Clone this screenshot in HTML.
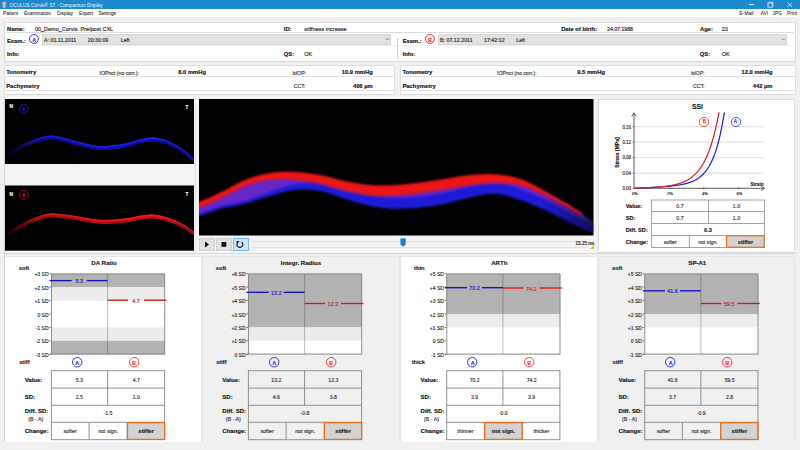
<!DOCTYPE html>
<html><head><meta charset="utf-8"><style>
html,body{margin:0;padding:0;}
body{width:800px;height:450px;position:relative;overflow:hidden;background:#f0f0f0;font-family:"Liberation Sans", sans-serif;}
.t{position:absolute;white-space:nowrap;-webkit-text-stroke:0.15px currentColor;}
</style></head><body>
<div style="position:absolute;left:0px;top:0px;width:800px;height:9px;background:#1c8acc"></div>
<svg style="position:absolute;left:0;top:0" width="9" height="9"><path d="M2.2 2 Q4.3 1.2 6.4 2 L5.8 7.6 Q4.3 8.2 2.8 7.6 Z" fill="#bdb3b8"/><path d="M2.4 2.3 L3.2 7.4" stroke="#d9906a" stroke-width="0.5"/><path d="M6.2 2.3 L5.4 7.4" stroke="#9a8aa0" stroke-width="0.5"/><path d="M3.6 2.6 L4 7" stroke="#e0d8d0" stroke-width="0.8"/></svg>
<div class="t" style="left:9.60px;top:4.40px;font-size:4.8px;line-height:4.8px;color:#eef6fc;-webkit-text-stroke:0">OCULUS Corvis® ST - Comparison Display</div>
<div style="position:absolute;left:749px;top:4px;width:5px;height:0.8px;background:#dfeffa"></div>
<svg style="position:absolute;left:766px;top:1px" width="8" height="8"><rect x="2" y="2" width="4.2" height="4.2" fill="none" stroke="#e6f2fb" stroke-width="0.8"/><path d="M3 2 V1.2 H7 V5.2 H6.2" fill="none" stroke="#e6f2fb" stroke-width="0.7"/></svg>
<svg style="position:absolute;left:786px;top:1px" width="8" height="8"><path d="M1.5 1.5 L6 6 M6 1.5 L1.5 6" stroke="#e6f2fb" stroke-width="0.8"/></svg>
<div style="position:absolute;left:0px;top:9px;width:800px;height:8px;background:#ffffff"></div>
<div class="t" style="left:2.90px;top:12.45px;font-size:4.9px;line-height:4.9px;color:#1a1a1a;-webkit-text-stroke:0.05px currentColor">Patient</div>
<div class="t" style="left:24.00px;top:12.45px;font-size:4.9px;line-height:4.9px;color:#1a1a1a;-webkit-text-stroke:0.05px currentColor">Examination</div>
<div class="t" style="left:57.00px;top:12.45px;font-size:4.9px;line-height:4.9px;color:#1a1a1a;-webkit-text-stroke:0.05px currentColor">Display</div>
<div class="t" style="left:78.90px;top:12.45px;font-size:4.9px;line-height:4.9px;color:#1a1a1a;-webkit-text-stroke:0.05px currentColor">Export</div>
<div class="t" style="left:98.40px;top:12.45px;font-size:4.9px;line-height:4.9px;color:#1a1a1a;-webkit-text-stroke:0.05px currentColor">Settings</div>
<div class="t" style="left:739.50px;top:12.45px;font-size:4.9px;line-height:4.9px;color:#1a1a1a;-webkit-text-stroke:0.05px currentColor">E-Mail</div>
<div class="t" style="left:760.50px;top:12.45px;font-size:4.9px;line-height:4.9px;color:#1a1a1a;-webkit-text-stroke:0.05px currentColor">AVI</div>
<div class="t" style="left:772.50px;top:12.45px;font-size:4.9px;line-height:4.9px;color:#1a1a1a;-webkit-text-stroke:0.05px currentColor">JPG</div>
<div class="t" style="left:787.00px;top:12.45px;font-size:4.9px;line-height:4.9px;color:#1a1a1a;-webkit-text-stroke:0.05px currentColor">Print</div>
<div style="position:absolute;left:4px;top:22px;width:792px;height:40px;background:#fff;border:1px solid #d9d9d9;box-sizing:border-box"></div>
<div style="position:absolute;left:6px;top:32px;width:788px;height:1px;background:#dcdcdc"></div>
<div class="t" style="left:7.00px;top:26.70px;font-size:5.8px;line-height:5.8px;font-weight:700;color:#111;">Name:</div>
<div class="t" style="left:34.90px;top:26.85px;font-size:5.5px;line-height:5.5px;color:#222;">00_Demo_Corvis. Pre/post CXL</div>
<div class="t" style="left:283.80px;top:26.70px;font-size:5.8px;line-height:5.8px;font-weight:700;color:#111;">ID:</div>
<div class="t" style="left:304.20px;top:26.85px;font-size:5.5px;line-height:5.5px;color:#222;">stiffness increase</div>
<div class="t" style="left:561.20px;top:26.70px;font-size:5.8px;line-height:5.8px;font-weight:700;color:#111;">Date of birth:</div>
<div class="t" style="left:607.00px;top:27.00px;font-size:5.2px;line-height:5.2px;color:#222;">24.07.1988</div>
<div class="t" style="left:700.00px;top:26.70px;font-size:5.8px;line-height:5.8px;font-weight:700;color:#111;">Age:</div>
<div class="t" style="left:721.70px;top:26.85px;font-size:5.5px;line-height:5.5px;color:#222;">23</div>
<div class="t" style="left:7.00px;top:39.10px;font-size:5.8px;line-height:5.8px;font-weight:700;color:#111;">Exam.:</div>
<div style="position:absolute;left:42px;top:34px;width:349px;height:11px;background:#e2e2e2;border:1px solid #d6d6d6;box-sizing:border-box"></div>
<div class="t" style="left:44.00px;top:37.95px;font-size:5.3px;line-height:5.3px;color:#2a2a2a;">A: 01.11.2011</div>
<div class="t" style="left:87.70px;top:37.95px;font-size:5.3px;line-height:5.3px;color:#2a2a2a;">20:30:09</div>
<div class="t" style="left:120.70px;top:37.95px;font-size:5.3px;line-height:5.3px;color:#2a2a2a;">Left</div>
<svg style="position:absolute;left:385px;top:37px" width="5" height="5"><path d="M1 1.5 L2.5 3 L4 1.5" fill="none" stroke="#555" stroke-width="0.7"/></svg>
<svg style="position:absolute;left:28.15px;top:33.35px" width="11.90" height="11.90"><circle cx="5.95" cy="5.95" r="4.45" fill="none" stroke="#3333dd" stroke-width="1.0"/></svg>
<div class="t" style="left:-65.90px;width:200px;text-align:center;top:37.60px;font-size:5.4px;line-height:5.4px;font-weight:700;color:#3333dd;">A</div>
<div class="t" style="left:7.00px;top:52.30px;font-size:5.8px;line-height:5.8px;font-weight:700;color:#111;">Info:</div>
<div class="t" style="left:402.70px;top:39.10px;font-size:5.8px;line-height:5.8px;font-weight:700;color:#111;">Exam.:</div>
<div style="position:absolute;left:438px;top:34px;width:349px;height:11px;background:#e2e2e2;border:1px solid #d6d6d6;box-sizing:border-box"></div>
<div class="t" style="left:440.00px;top:37.95px;font-size:5.3px;line-height:5.3px;color:#2a2a2a;">B: 07.12.2011</div>
<div class="t" style="left:484.00px;top:37.95px;font-size:5.3px;line-height:5.3px;color:#2a2a2a;">17:42:12</div>
<div class="t" style="left:516.20px;top:37.95px;font-size:5.3px;line-height:5.3px;color:#2a2a2a;">Left</div>
<svg style="position:absolute;left:781px;top:37px" width="5" height="5"><path d="M1 1.5 L2.5 3 L4 1.5" fill="none" stroke="#555" stroke-width="0.7"/></svg>
<svg style="position:absolute;left:424.05px;top:33.35px" width="11.90" height="11.90"><circle cx="5.95" cy="5.95" r="4.45" fill="none" stroke="#e03030" stroke-width="1.0"/></svg>
<div class="t" style="left:330.00px;width:200px;text-align:center;top:37.60px;font-size:5.4px;line-height:5.4px;font-weight:700;color:#e03030;">B</div>
<div class="t" style="left:402.70px;top:52.30px;font-size:5.8px;line-height:5.8px;font-weight:700;color:#111;">Info:</div>
<div style="position:absolute;left:397px;top:38px;width:1px;height:21px;background:#cfcfcf"></div>
<div style="position:absolute;left:6px;top:45px;width:788px;height:0.6px;background:#eeeeee"></div>
<div class="t" style="left:283.80px;top:52.30px;font-size:5.8px;line-height:5.8px;font-weight:700;color:#111;">QS:</div>
<div class="t" style="left:304.20px;top:52.45px;font-size:5.5px;line-height:5.5px;color:#222;">OK</div>
<div class="t" style="left:699.80px;top:52.30px;font-size:5.8px;line-height:5.8px;font-weight:700;color:#111;">QS:</div>
<div class="t" style="left:721.70px;top:52.45px;font-size:5.5px;line-height:5.5px;color:#222;">OK</div>
<div style="position:absolute;left:4px;top:65px;width:391px;height:30px;background:#fff;border:1px solid #dedede;box-sizing:border-box"></div>
<div style="position:absolute;left:5.5px;top:76px;width:388px;height:1px;background:#e0e0e0"></div>
<div style="position:absolute;left:5.5px;top:90px;width:388px;height:1px;background:#e0e0e0"></div>
<div class="t" style="left:6.20px;top:70.25px;font-size:5.9px;line-height:5.9px;font-weight:700;color:#111;">Tonometry</div>
<div class="t" style="left:6.20px;top:83.65px;font-size:5.9px;line-height:5.9px;font-weight:700;color:#111;">Pachymetry</div>
<div class="t" style="left:99.50px;top:70.80px;font-size:5.2px;line-height:5.2px;color:#333;">IOPnct (no corr.):</div>
<div class="t" style="right:594.00px;top:70.30px;font-size:5.8px;line-height:5.8px;font-weight:700;color:#111;">8.0 mmHg</div>
<div class="t" style="left:292.80px;top:70.80px;font-size:5.2px;line-height:5.2px;color:#333;">bIOP:</div>
<div class="t" style="right:427.30px;top:70.30px;font-size:5.8px;line-height:5.8px;font-weight:700;color:#111;">10.9 mmHg</div>
<div class="t" style="left:293.70px;top:84.00px;font-size:5.2px;line-height:5.2px;color:#333;">CCT:</div>
<div class="t" style="right:427.30px;top:83.70px;font-size:5.8px;line-height:5.8px;font-weight:700;color:#111;">406 µm</div>
<div style="position:absolute;left:400px;top:65px;width:396px;height:30px;background:#fff;border:1px solid #dedede;box-sizing:border-box"></div>
<div style="position:absolute;left:401.5px;top:76px;width:393px;height:1px;background:#e0e0e0"></div>
<div style="position:absolute;left:401.5px;top:90px;width:393px;height:1px;background:#e0e0e0"></div>
<div class="t" style="left:402.40px;top:70.25px;font-size:5.9px;line-height:5.9px;font-weight:700;color:#111;">Tonometry</div>
<div class="t" style="left:402.40px;top:83.65px;font-size:5.9px;line-height:5.9px;font-weight:700;color:#111;">Pachymetry</div>
<div class="t" style="left:497.00px;top:70.80px;font-size:5.2px;line-height:5.2px;color:#333;">IOPnct (no corr.):</div>
<div class="t" style="right:195.00px;top:70.30px;font-size:5.8px;line-height:5.8px;font-weight:700;color:#111;">9.5 mmHg</div>
<div class="t" style="left:691.30px;top:70.80px;font-size:5.2px;line-height:5.2px;color:#333;">bIOP:</div>
<div class="t" style="right:27.50px;top:70.30px;font-size:5.8px;line-height:5.8px;font-weight:700;color:#111;">12.0 mmHg</div>
<div class="t" style="left:693.00px;top:84.00px;font-size:5.2px;line-height:5.2px;color:#333;">CCT:</div>
<div class="t" style="right:27.50px;top:83.70px;font-size:5.8px;line-height:5.8px;font-weight:700;color:#111;">442 µm</div>
<div style="position:absolute;left:4px;top:96px;width:592px;height:157px;background:#f4f4f4"></div>
<div style="position:absolute;left:195px;top:99px;width:1px;height:153px;background:#e4e4e4"></div>
<svg style="position:absolute;left:0;top:0" width="800" height="450">
<defs><filter id="b1" x="-10%" y="-50%" width="120%" height="200%"><feGaussianBlur stdDeviation="0.7"/></filter><filter id="b2" x="-10%" y="-50%" width="120%" height="200%"><feGaussianBlur stdDeviation="1.0"/></filter><linearGradient id="fadeS" x1="0" x2="1" y1="0" y2="0"><stop offset="0" stop-color="#fff" stop-opacity="0"/><stop offset="0.2" stop-color="#fff" stop-opacity="0.85"/><stop offset="0.8" stop-color="#fff" stop-opacity="1"/><stop offset="1" stop-color="#fff" stop-opacity="0.7"/></linearGradient><mask id="mA" maskUnits="userSpaceOnUse" x="0" y="0" width="800" height="450"><rect x="5" y="99" width="189" height="65" fill="url(#fadeS)"/></mask><mask id="mB" maskUnits="userSpaceOnUse" x="0" y="0" width="800" height="450"><rect x="5" y="185" width="189" height="66" fill="url(#fadeS)"/></mask></defs>
<rect x="4.5" y="99" width="189.5" height="65" fill="#000"/>
<g mask="url(#mA)"><path d="M8.0,152.51 L9.5,151.69 L11.0,150.80 L12.5,149.89 L14.0,149.00 L15.5,148.19 L17.0,147.39 L18.5,146.59 L20.0,145.79 L21.5,145.00 L23.0,144.22 L24.5,143.45 L26.0,142.80 L27.5,142.19 L29.0,141.58 L30.5,140.98 L32.0,140.39 L33.5,139.82 L35.0,139.28 L36.5,138.77 L38.0,138.29 L39.5,137.82 L41.0,137.35 L42.5,136.90 L44.0,136.48 L45.5,136.11 L47.0,135.80 L48.5,135.58 L50.0,135.45 L51.5,135.43 L53.0,135.51 L54.5,135.67 L56.0,135.90 L57.5,136.19 L59.0,136.51 L60.5,136.85 L62.0,137.20 L63.5,137.54 L65.0,137.90 L66.5,138.30 L68.0,138.73 L69.5,139.17 L71.0,139.64 L72.5,140.12 L74.0,140.62 L75.5,141.04 L77.0,141.33 L78.5,141.65 L80.0,141.99 L81.5,142.35 L83.0,142.72 L84.5,143.09 L86.0,143.47 L87.5,143.84 L89.0,144.20 L90.5,144.54 L92.0,144.86 L93.5,145.15 L95.0,145.41 L96.5,145.63 L98.0,145.80 L99.5,145.92 L101.0,145.99 L102.5,146.02 L104.0,146.00 L105.5,145.95 L107.0,145.87 L108.5,145.76 L110.0,145.62 L111.5,145.46 L113.0,145.28 L114.5,145.08 L116.0,144.86 L117.5,144.64 L119.0,144.40 L120.5,144.17 L122.0,143.93 L123.5,143.69 L125.0,143.45 L126.5,143.13 L128.0,142.77 L129.5,142.37 L131.0,141.93 L132.5,141.48 L134.0,141.02 L135.5,140.56 L137.0,140.10 L138.5,139.67 L140.0,139.26 L141.5,138.88 L143.0,138.55 L144.5,138.28 L146.0,137.93 L147.5,137.64 L149.0,137.45 L150.5,137.36 L152.0,137.35 L153.5,137.40 L155.0,137.50 L156.5,137.65 L158.0,137.87 L159.5,138.16 L161.0,138.52 L162.5,138.92 L164.0,139.37 L165.5,139.87 L167.0,140.42 L168.5,141.03 L170.0,141.68 L171.5,142.39 L173.0,143.14 L174.5,143.93 L176.0,144.76 L177.5,145.66 L179.0,146.61 L180.5,147.60 L182.0,148.61 L183.5,149.65 L185.0,150.70 L186.5,151.98 L188.0,153.40 L189.5,154.86 L191.0,156.22 L192.5,157.37 L194.0,158.20 L194.0,162.30 L192.5,161.47 L191.0,160.32 L189.5,158.96 L188.0,157.50 L186.5,156.08 L185.0,154.80 L183.5,153.75 L182.0,152.71 L180.5,151.70 L179.0,150.71 L177.5,149.76 L176.0,148.86 L174.5,148.03 L173.0,147.24 L171.5,146.49 L170.0,145.78 L168.5,145.13 L167.0,144.52 L165.5,143.97 L164.0,143.47 L162.5,143.02 L161.0,142.62 L159.5,142.26 L158.0,141.97 L156.5,141.75 L155.0,141.60 L153.5,141.50 L152.0,141.45 L150.5,141.46 L149.0,141.55 L147.5,141.74 L146.0,142.03 L144.5,142.38 L143.0,142.65 L141.5,142.98 L140.0,143.36 L138.5,143.77 L137.0,144.20 L135.5,144.66 L134.0,145.12 L132.5,145.58 L131.0,146.03 L129.5,146.47 L128.0,146.87 L126.5,147.23 L125.0,147.55 L123.5,147.79 L122.0,148.03 L120.5,148.27 L119.0,148.50 L117.5,148.74 L116.0,148.96 L114.5,149.18 L113.0,149.38 L111.5,149.56 L110.0,149.72 L108.5,149.86 L107.0,149.97 L105.5,150.05 L104.0,150.10 L102.5,150.12 L101.0,150.09 L99.5,150.02 L98.0,149.90 L96.5,149.73 L95.0,149.51 L93.5,149.25 L92.0,148.96 L90.5,148.64 L89.0,148.30 L87.5,147.94 L86.0,147.57 L84.5,147.19 L83.0,146.82 L81.5,146.45 L80.0,146.09 L78.5,145.75 L77.0,145.43 L75.5,145.14 L74.0,144.72 L72.5,144.22 L71.0,143.74 L69.5,143.27 L68.0,142.83 L66.5,142.40 L65.0,142.00 L63.5,141.64 L62.0,141.30 L60.5,140.95 L59.0,140.61 L57.5,140.29 L56.0,140.00 L54.5,139.77 L53.0,139.61 L51.5,139.53 L50.0,139.55 L48.5,139.68 L47.0,139.90 L45.5,140.21 L44.0,140.58 L42.5,141.00 L41.0,141.45 L39.5,141.92 L38.0,142.39 L36.5,142.87 L35.0,143.38 L33.5,143.92 L32.0,144.49 L30.5,145.08 L29.0,145.68 L27.5,146.29 L26.0,146.90 L24.5,147.55 L23.0,148.32 L21.5,149.10 L20.0,149.89 L18.5,150.69 L17.0,151.49 L15.5,152.29 L14.0,153.10 L12.5,153.99 L11.0,154.90 L9.5,155.79 L8.0,156.61Z" fill="#0e0eb8" filter="url(#b1)"/><path d="M8.0,152.61 L9.5,151.79 L11.0,150.90 L12.5,149.99 L14.0,149.10 L15.5,148.29 L17.0,147.49 L18.5,146.69 L20.0,145.89 L21.5,145.10 L23.0,144.32 L24.5,143.55 L26.0,142.90 L27.5,142.29 L29.0,141.68 L30.5,141.08 L32.0,140.49 L33.5,139.92 L35.0,139.38 L36.5,138.87 L38.0,138.39 L39.5,137.92 L41.0,137.45 L42.5,137.00 L44.0,136.58 L45.5,136.21 L47.0,135.90 L48.5,135.68 L50.0,135.55 L51.5,135.53 L53.0,135.61 L54.5,135.77 L56.0,136.00 L57.5,136.29 L59.0,136.61 L60.5,136.95 L62.0,137.30 L63.5,137.64 L65.0,138.00 L66.5,138.40 L68.0,138.83 L69.5,139.27 L71.0,139.74 L72.5,140.22 L74.0,140.72 L75.5,141.14 L77.0,141.43 L78.5,141.75 L80.0,142.09 L81.5,142.45 L83.0,142.82 L84.5,143.19 L86.0,143.57 L87.5,143.94 L89.0,144.30 L90.5,144.64 L92.0,144.96 L93.5,145.25 L95.0,145.51 L96.5,145.73 L98.0,145.90 L99.5,146.02 L101.0,146.09 L102.5,146.12 L104.0,146.10 L105.5,146.05 L107.0,145.97 L108.5,145.86 L110.0,145.72 L111.5,145.56 L113.0,145.38 L114.5,145.18 L116.0,144.96 L117.5,144.74 L119.0,144.50 L120.5,144.27 L122.0,144.03 L123.5,143.79 L125.0,143.55 L126.5,143.23 L128.0,142.87 L129.5,142.47 L131.0,142.03 L132.5,141.58 L134.0,141.12 L135.5,140.66 L137.0,140.20 L138.5,139.77 L140.0,139.36 L141.5,138.98 L143.0,138.65 L144.5,138.38 L146.0,138.03 L147.5,137.74 L149.0,137.55 L150.5,137.46 L152.0,137.45 L153.5,137.50 L155.0,137.60 L156.5,137.75 L158.0,137.97 L159.5,138.26 L161.0,138.62 L162.5,139.02 L164.0,139.47 L165.5,139.97 L167.0,140.52 L168.5,141.13 L170.0,141.78 L171.5,142.49 L173.0,143.24 L174.5,144.03 L176.0,144.86 L177.5,145.76 L179.0,146.71 L180.5,147.70 L182.0,148.71 L183.5,149.75 L185.0,150.80 L186.5,152.08 L188.0,153.50 L189.5,154.96 L191.0,156.32 L192.5,157.47 L194.0,158.30 L194.0,159.90 L192.5,159.07 L191.0,157.92 L189.5,156.56 L188.0,155.10 L186.5,153.68 L185.0,152.40 L183.5,151.35 L182.0,150.31 L180.5,149.30 L179.0,148.31 L177.5,147.36 L176.0,146.46 L174.5,145.63 L173.0,144.84 L171.5,144.09 L170.0,143.38 L168.5,142.73 L167.0,142.12 L165.5,141.57 L164.0,141.07 L162.5,140.62 L161.0,140.22 L159.5,139.86 L158.0,139.57 L156.5,139.35 L155.0,139.20 L153.5,139.10 L152.0,139.05 L150.5,139.06 L149.0,139.15 L147.5,139.34 L146.0,139.63 L144.5,139.98 L143.0,140.25 L141.5,140.58 L140.0,140.96 L138.5,141.37 L137.0,141.80 L135.5,142.26 L134.0,142.72 L132.5,143.18 L131.0,143.63 L129.5,144.07 L128.0,144.47 L126.5,144.83 L125.0,145.15 L123.5,145.39 L122.0,145.63 L120.5,145.87 L119.0,146.10 L117.5,146.34 L116.0,146.56 L114.5,146.78 L113.0,146.98 L111.5,147.16 L110.0,147.32 L108.5,147.46 L107.0,147.57 L105.5,147.65 L104.0,147.70 L102.5,147.72 L101.0,147.69 L99.5,147.62 L98.0,147.50 L96.5,147.33 L95.0,147.11 L93.5,146.85 L92.0,146.56 L90.5,146.24 L89.0,145.90 L87.5,145.54 L86.0,145.17 L84.5,144.79 L83.0,144.42 L81.5,144.05 L80.0,143.69 L78.5,143.35 L77.0,143.03 L75.5,142.74 L74.0,142.32 L72.5,141.82 L71.0,141.34 L69.5,140.87 L68.0,140.43 L66.5,140.00 L65.0,139.60 L63.5,139.24 L62.0,138.90 L60.5,138.55 L59.0,138.21 L57.5,137.89 L56.0,137.60 L54.5,137.37 L53.0,137.21 L51.5,137.13 L50.0,137.15 L48.5,137.28 L47.0,137.50 L45.5,137.81 L44.0,138.18 L42.5,138.60 L41.0,139.05 L39.5,139.52 L38.0,139.99 L36.5,140.47 L35.0,140.98 L33.5,141.52 L32.0,142.09 L30.5,142.68 L29.0,143.28 L27.5,143.89 L26.0,144.50 L24.5,145.15 L23.0,145.92 L21.5,146.70 L20.0,147.49 L18.5,148.29 L17.0,149.09 L15.5,149.89 L14.0,150.70 L12.5,151.59 L11.0,152.50 L9.5,153.39 L8.0,154.21Z" fill="#2a2aff" opacity="0.75" filter="url(#b1)"/></g>
<rect x="4.5" y="185.5" width="189.5" height="65.2" fill="#000"/>
<g mask="url(#mB)"><path d="M8.0,231.74 L9.5,230.26 L11.0,229.30 L12.5,228.63 L14.0,227.90 L15.5,227.12 L17.0,226.32 L18.5,225.50 L20.0,224.68 L21.5,223.89 L23.0,223.13 L24.5,222.42 L26.0,221.69 L27.5,220.94 L29.0,220.21 L30.5,219.52 L32.0,218.86 L33.5,218.22 L35.0,217.62 L36.5,217.06 L38.0,216.53 L39.5,216.01 L41.0,215.51 L42.5,215.05 L44.0,214.62 L45.5,214.23 L47.0,213.90 L48.5,213.64 L50.0,213.45 L51.5,213.35 L53.0,213.33 L54.5,213.39 L56.0,213.51 L57.5,213.67 L59.0,213.85 L60.5,214.03 L62.0,214.20 L63.5,214.34 L65.0,214.49 L66.5,214.65 L68.0,214.83 L69.5,215.02 L71.0,215.23 L72.5,215.47 L74.0,215.75 L75.5,216.01 L77.0,216.20 L78.5,216.41 L80.0,216.65 L81.5,216.91 L83.0,217.18 L84.5,217.45 L86.0,217.73 L87.5,218.01 L89.0,218.29 L90.5,218.55 L92.0,218.80 L93.5,219.03 L95.0,219.24 L96.5,219.42 L98.0,219.56 L99.5,219.67 L101.0,219.74 L102.5,219.79 L104.0,219.81 L105.5,219.80 L107.0,219.77 L108.5,219.73 L110.0,219.67 L111.5,219.59 L113.0,219.49 L114.5,219.39 L116.0,219.27 L117.5,219.14 L119.0,219.01 L120.5,218.87 L122.0,218.73 L123.5,218.59 L125.0,218.45 L126.5,218.25 L128.0,218.02 L129.5,217.76 L131.0,217.48 L132.5,217.18 L134.0,216.87 L135.5,216.56 L137.0,216.26 L138.5,215.97 L140.0,215.69 L141.5,215.44 L143.0,215.23 L144.5,215.05 L146.0,214.83 L147.5,214.65 L149.0,214.54 L150.5,214.50 L152.0,214.52 L153.5,214.59 L155.0,214.70 L156.5,214.86 L158.0,215.08 L159.5,215.36 L161.0,215.68 L162.5,216.04 L164.0,216.43 L165.5,216.84 L167.0,217.28 L168.5,217.75 L170.0,218.26 L171.5,218.80 L173.0,219.38 L174.5,219.99 L176.0,220.63 L177.5,221.32 L179.0,222.04 L180.5,222.80 L182.0,223.58 L183.5,224.38 L185.0,225.20 L186.5,226.21 L188.0,227.35 L189.5,228.51 L191.0,229.61 L192.5,230.54 L194.0,231.20 L194.0,235.30 L192.5,234.64 L191.0,233.71 L189.5,232.61 L188.0,231.45 L186.5,230.31 L185.0,229.30 L183.5,228.48 L182.0,227.68 L180.5,226.90 L179.0,226.14 L177.5,225.42 L176.0,224.73 L174.5,224.09 L173.0,223.48 L171.5,222.90 L170.0,222.36 L168.5,221.85 L167.0,221.38 L165.5,220.94 L164.0,220.53 L162.5,220.14 L161.0,219.78 L159.5,219.46 L158.0,219.18 L156.5,218.96 L155.0,218.80 L153.5,218.69 L152.0,218.62 L150.5,218.60 L149.0,218.64 L147.5,218.75 L146.0,218.93 L144.5,219.15 L143.0,219.33 L141.5,219.54 L140.0,219.79 L138.5,220.07 L137.0,220.36 L135.5,220.66 L134.0,220.97 L132.5,221.28 L131.0,221.58 L129.5,221.86 L128.0,222.12 L126.5,222.35 L125.0,222.55 L123.5,222.69 L122.0,222.83 L120.5,222.97 L119.0,223.11 L117.5,223.24 L116.0,223.37 L114.5,223.49 L113.0,223.59 L111.5,223.69 L110.0,223.77 L108.5,223.83 L107.0,223.87 L105.5,223.90 L104.0,223.91 L102.5,223.89 L101.0,223.84 L99.5,223.77 L98.0,223.66 L96.5,223.52 L95.0,223.34 L93.5,223.13 L92.0,222.90 L90.5,222.65 L89.0,222.39 L87.5,222.11 L86.0,221.83 L84.5,221.55 L83.0,221.28 L81.5,221.01 L80.0,220.75 L78.5,220.51 L77.0,220.30 L75.5,220.11 L74.0,219.85 L72.5,219.57 L71.0,219.33 L69.5,219.12 L68.0,218.93 L66.5,218.75 L65.0,218.59 L63.5,218.44 L62.0,218.30 L60.5,218.13 L59.0,217.95 L57.5,217.77 L56.0,217.61 L54.5,217.49 L53.0,217.43 L51.5,217.45 L50.0,217.55 L48.5,217.74 L47.0,218.00 L45.5,218.33 L44.0,218.72 L42.5,219.15 L41.0,219.61 L39.5,220.11 L38.0,220.63 L36.5,221.16 L35.0,221.72 L33.5,222.32 L32.0,222.96 L30.5,223.62 L29.0,224.31 L27.5,225.04 L26.0,225.79 L24.5,226.52 L23.0,227.23 L21.5,227.99 L20.0,228.78 L18.5,229.60 L17.0,230.42 L15.5,231.22 L14.0,232.00 L12.5,232.73 L11.0,233.40 L9.5,234.36 L8.0,235.84Z" fill="#c81010" filter="url(#b1)"/><path d="M8.0,231.84 L9.5,230.36 L11.0,229.40 L12.5,228.73 L14.0,228.00 L15.5,227.22 L17.0,226.42 L18.5,225.60 L20.0,224.78 L21.5,223.99 L23.0,223.23 L24.5,222.52 L26.0,221.79 L27.5,221.04 L29.0,220.31 L30.5,219.62 L32.0,218.96 L33.5,218.32 L35.0,217.72 L36.5,217.16 L38.0,216.63 L39.5,216.11 L41.0,215.61 L42.5,215.15 L44.0,214.72 L45.5,214.33 L47.0,214.00 L48.5,213.74 L50.0,213.55 L51.5,213.45 L53.0,213.43 L54.5,213.49 L56.0,213.61 L57.5,213.77 L59.0,213.95 L60.5,214.13 L62.0,214.30 L63.5,214.44 L65.0,214.59 L66.5,214.75 L68.0,214.93 L69.5,215.12 L71.0,215.33 L72.5,215.57 L74.0,215.85 L75.5,216.11 L77.0,216.30 L78.5,216.51 L80.0,216.75 L81.5,217.01 L83.0,217.28 L84.5,217.55 L86.0,217.83 L87.5,218.11 L89.0,218.39 L90.5,218.65 L92.0,218.90 L93.5,219.13 L95.0,219.34 L96.5,219.52 L98.0,219.66 L99.5,219.77 L101.0,219.84 L102.5,219.89 L104.0,219.91 L105.5,219.90 L107.0,219.87 L108.5,219.83 L110.0,219.77 L111.5,219.69 L113.0,219.59 L114.5,219.49 L116.0,219.37 L117.5,219.24 L119.0,219.11 L120.5,218.97 L122.0,218.83 L123.5,218.69 L125.0,218.55 L126.5,218.35 L128.0,218.12 L129.5,217.86 L131.0,217.58 L132.5,217.28 L134.0,216.97 L135.5,216.66 L137.0,216.36 L138.5,216.07 L140.0,215.79 L141.5,215.54 L143.0,215.33 L144.5,215.15 L146.0,214.93 L147.5,214.75 L149.0,214.64 L150.5,214.60 L152.0,214.62 L153.5,214.69 L155.0,214.80 L156.5,214.96 L158.0,215.18 L159.5,215.46 L161.0,215.78 L162.5,216.14 L164.0,216.53 L165.5,216.94 L167.0,217.38 L168.5,217.85 L170.0,218.36 L171.5,218.90 L173.0,219.48 L174.5,220.09 L176.0,220.73 L177.5,221.42 L179.0,222.14 L180.5,222.90 L182.0,223.68 L183.5,224.48 L185.0,225.30 L186.5,226.31 L188.0,227.45 L189.5,228.61 L191.0,229.71 L192.5,230.64 L194.0,231.30 L194.0,232.90 L192.5,232.24 L191.0,231.31 L189.5,230.21 L188.0,229.05 L186.5,227.91 L185.0,226.90 L183.5,226.08 L182.0,225.28 L180.5,224.50 L179.0,223.74 L177.5,223.02 L176.0,222.33 L174.5,221.69 L173.0,221.08 L171.5,220.50 L170.0,219.96 L168.5,219.45 L167.0,218.98 L165.5,218.54 L164.0,218.13 L162.5,217.74 L161.0,217.38 L159.5,217.06 L158.0,216.78 L156.5,216.56 L155.0,216.40 L153.5,216.29 L152.0,216.22 L150.5,216.20 L149.0,216.24 L147.5,216.35 L146.0,216.53 L144.5,216.75 L143.0,216.93 L141.5,217.14 L140.0,217.39 L138.5,217.67 L137.0,217.96 L135.5,218.26 L134.0,218.57 L132.5,218.88 L131.0,219.18 L129.5,219.46 L128.0,219.72 L126.5,219.95 L125.0,220.15 L123.5,220.29 L122.0,220.43 L120.5,220.57 L119.0,220.71 L117.5,220.84 L116.0,220.97 L114.5,221.09 L113.0,221.19 L111.5,221.29 L110.0,221.37 L108.5,221.43 L107.0,221.47 L105.5,221.50 L104.0,221.51 L102.5,221.49 L101.0,221.44 L99.5,221.37 L98.0,221.26 L96.5,221.12 L95.0,220.94 L93.5,220.73 L92.0,220.50 L90.5,220.25 L89.0,219.99 L87.5,219.71 L86.0,219.43 L84.5,219.15 L83.0,218.88 L81.5,218.61 L80.0,218.35 L78.5,218.11 L77.0,217.90 L75.5,217.71 L74.0,217.45 L72.5,217.17 L71.0,216.93 L69.5,216.72 L68.0,216.53 L66.5,216.35 L65.0,216.19 L63.5,216.04 L62.0,215.90 L60.5,215.73 L59.0,215.55 L57.5,215.37 L56.0,215.21 L54.5,215.09 L53.0,215.03 L51.5,215.05 L50.0,215.15 L48.5,215.34 L47.0,215.60 L45.5,215.93 L44.0,216.32 L42.5,216.75 L41.0,217.21 L39.5,217.71 L38.0,218.23 L36.5,218.76 L35.0,219.32 L33.5,219.92 L32.0,220.56 L30.5,221.22 L29.0,221.91 L27.5,222.64 L26.0,223.39 L24.5,224.12 L23.0,224.83 L21.5,225.59 L20.0,226.38 L18.5,227.20 L17.0,228.02 L15.5,228.82 L14.0,229.60 L12.5,230.33 L11.0,231.00 L9.5,231.96 L8.0,233.44Z" fill="#ff2020" opacity="0.8" filter="url(#b1)"/></g>
<rect x="199" y="99" width="394.5" height="136.5" fill="#000"/>
<clipPath id="cM"><rect x="199" y="99" width="394.5" height="136.5"/></clipPath>
<g clip-path="url(#cM)">
<linearGradient id="gR" gradientUnits="userSpaceOnUse" x1="540" x2="594" y1="0" y2="0"><stop offset="0" stop-color="#fff" stop-opacity="1"/><stop offset="1" stop-color="#fff" stop-opacity="0.45"/></linearGradient><mask id="mR" maskUnits="userSpaceOnUse" x="0" y="0" width="800" height="450"><rect x="199" y="99" width="395" height="137" fill="url(#gR)"/></mask>
<g mask="url(#mR)"><path d="M198.0,207.50 L200.0,205.77 L202.0,205.21 L204.0,204.56 L206.0,203.82 L208.0,203.01 L210.0,202.14 L212.0,201.22 L214.0,200.25 L216.0,199.25 L218.0,198.22 L220.0,197.18 L222.0,196.30 L224.0,195.36 L226.0,194.37 L228.0,193.33 L230.0,192.26 L232.0,191.19 L234.0,190.11 L236.0,189.06 L238.0,188.03 L240.0,187.05 L242.0,186.12 L244.0,185.27 L246.0,184.50 L248.0,183.77 L250.0,183.07 L252.0,182.41 L254.0,181.78 L256.0,181.18 L258.0,180.63 L260.0,180.10 L262.0,179.68 L264.0,179.29 L266.0,178.95 L268.0,178.64 L270.0,178.38 L272.0,178.16 L274.0,177.98 L276.0,177.86 L278.0,177.77 L280.0,177.73 L282.0,177.72 L284.0,177.74 L286.0,177.79 L288.0,177.87 L290.0,177.97 L292.0,178.10 L294.0,178.24 L296.0,178.39 L298.0,178.58 L300.0,178.80 L302.0,179.03 L304.0,179.29 L306.0,179.57 L308.0,179.88 L310.0,180.20 L312.0,180.55 L314.0,180.92 L316.0,181.31 L318.0,181.71 L320.0,182.12 L322.0,182.57 L324.0,183.06 L326.0,183.59 L328.0,184.14 L330.0,184.72 L332.0,185.31 L334.0,185.90 L336.0,186.49 L338.0,187.07 L340.0,187.63 L342.0,188.17 L344.0,188.67 L346.0,189.14 L348.0,189.60 L350.0,190.05 L352.0,190.50 L354.0,190.94 L356.0,191.36 L358.0,191.77 L360.0,192.16 L362.0,192.52 L364.0,192.86 L366.0,193.17 L368.0,193.45 L370.0,193.69 L372.0,193.89 L374.0,194.07 L376.0,194.21 L378.0,194.32 L380.0,194.41 L382.0,194.41 L384.0,194.39 L386.0,194.35 L388.0,194.29 L390.0,194.22 L392.0,194.14 L394.0,194.05 L396.0,193.95 L398.0,193.82 L400.0,193.68 L402.0,193.52 L404.0,193.34 L406.0,193.14 L408.0,192.93 L410.0,192.71 L412.0,192.48 L414.0,192.24 L416.0,192.00 L418.0,191.75 L420.0,191.50 L422.0,191.24 L424.0,190.97 L426.0,190.69 L428.0,190.39 L430.0,190.09 L432.0,189.78 L434.0,189.47 L436.0,189.15 L438.0,188.84 L440.0,188.52 L442.0,188.21 L444.0,187.90 L446.0,187.60 L448.0,187.28 L450.0,186.95 L452.0,186.62 L454.0,186.28 L456.0,185.94 L458.0,185.61 L460.0,185.28 L462.0,184.98 L464.0,184.69 L466.0,184.43 L468.0,184.20 L470.0,184.00 L472.0,183.68 L474.0,183.37 L476.0,183.07 L478.0,182.78 L480.0,182.52 L482.0,182.27 L484.0,182.06 L486.0,181.87 L488.0,181.71 L490.0,181.59 L492.0,181.51 L494.0,181.47 L496.0,181.47 L498.0,181.50 L500.0,181.55 L502.0,181.62 L504.0,181.73 L506.0,181.85 L508.0,181.97 L510.0,182.14 L512.0,182.35 L514.0,182.62 L516.0,182.94 L518.0,183.31 L520.0,183.75 L522.0,184.26 L524.0,184.85 L526.0,185.51 L528.0,186.24 L530.0,187.01 L532.0,187.87 L534.0,188.77 L536.0,189.69 L538.0,190.62 L540.0,191.56 L542.0,192.50 L544.0,193.42 L546.0,194.33 L548.0,195.29 L550.0,196.28 L552.0,197.37 L554.0,198.47 L556.0,199.58 L558.0,200.69 L560.0,201.78 L562.0,202.84 L564.0,203.86 L566.0,204.83 L568.0,205.73 L570.0,206.56 L572.0,208.14 L574.0,209.45 L576.0,210.59 L578.0,211.67 L580.0,212.77 L582.0,214.00 L584.0,215.55 L586.0,217.26 L588.0,219.00 L590.0,220.63 L592.0,222.01 L594.0,223.00 L594.0,233.00 L592.0,232.50 L590.0,231.88 L588.0,231.16 L586.0,230.35 L584.0,229.47 L582.0,228.53 L580.0,227.55 L578.0,226.54 L576.0,225.51 L574.0,224.49 L572.0,223.48 L570.0,222.50 L568.0,221.56 L566.0,220.59 L564.0,219.58 L562.0,218.56 L560.0,217.52 L558.0,216.48 L556.0,215.44 L554.0,214.40 L552.0,213.38 L550.0,212.37 L548.0,211.40 L546.0,210.46 L544.0,209.55 L542.0,208.66 L540.0,207.78 L538.0,206.91 L536.0,206.06 L534.0,205.22 L532.0,204.41 L530.0,203.61 L528.0,202.84 L526.0,202.09 L524.0,201.36 L522.0,200.67 L520.0,200.00 L518.0,199.34 L516.0,198.68 L514.0,198.02 L512.0,197.37 L510.0,196.75 L508.0,196.16 L506.0,195.61 L504.0,195.11 L502.0,194.67 L500.0,194.30 L498.0,194.01 L496.0,193.81 L494.0,193.71 L492.0,193.72 L490.0,193.82 L488.0,194.00 L486.0,194.26 L484.0,194.57 L482.0,194.94 L480.0,195.34 L478.0,195.77 L476.0,196.21 L474.0,196.65 L472.0,197.09 L470.0,197.50 L468.0,197.92 L466.0,198.39 L464.0,198.88 L462.0,199.40 L460.0,199.94 L458.0,200.49 L456.0,201.04 L454.0,201.58 L452.0,202.11 L450.0,202.62 L448.0,203.10 L446.0,203.54 L444.0,203.95 L442.0,204.33 L440.0,204.70 L438.0,205.05 L436.0,205.39 L434.0,205.71 L432.0,206.01 L430.0,206.30 L428.0,206.57 L426.0,206.83 L424.0,207.07 L422.0,207.29 L420.0,207.50 L418.0,207.70 L416.0,207.88 L414.0,208.06 L412.0,208.22 L410.0,208.37 L408.0,208.50 L406.0,208.61 L404.0,208.70 L402.0,208.76 L400.0,208.80 L398.0,208.80 L396.0,208.78 L394.0,208.72 L392.0,208.63 L390.0,208.53 L388.0,208.40 L386.0,208.24 L384.0,208.06 L382.0,207.85 L380.0,207.62 L378.0,207.35 L376.0,207.06 L374.0,206.74 L372.0,206.38 L370.0,206.00 L368.0,205.57 L366.0,205.10 L364.0,204.58 L362.0,204.03 L360.0,203.45 L358.0,202.84 L356.0,202.22 L354.0,201.58 L352.0,200.94 L350.0,200.30 L348.0,199.67 L346.0,199.05 L344.0,198.44 L342.0,197.80 L340.0,197.12 L338.0,196.43 L336.0,195.72 L334.0,195.01 L332.0,194.31 L330.0,193.64 L328.0,193.00 L326.0,192.40 L324.0,191.86 L322.0,191.39 L320.0,191.00 L318.0,190.67 L316.0,190.38 L314.0,190.14 L312.0,189.94 L310.0,189.78 L308.0,189.66 L306.0,189.59 L304.0,189.56 L302.0,189.58 L300.0,189.64 L298.0,189.75 L296.0,189.91 L294.0,190.11 L292.0,190.38 L290.0,190.72 L288.0,191.12 L286.0,191.57 L284.0,192.06 L282.0,192.59 L280.0,193.14 L278.0,193.71 L276.0,194.29 L274.0,194.87 L272.0,195.44 L270.0,196.00 L268.0,196.57 L266.0,197.17 L264.0,197.80 L262.0,198.45 L260.0,199.11 L258.0,199.77 L256.0,200.43 L254.0,201.09 L252.0,201.73 L250.0,202.35 L248.0,202.94 L246.0,203.49 L244.0,204.00 L242.0,204.48 L240.0,204.92 L238.0,205.34 L236.0,205.74 L234.0,206.13 L232.0,206.50 L230.0,206.86 L228.0,207.23 L226.0,207.59 L224.0,207.97 L222.0,208.35 L220.0,208.75 L218.0,209.46 L216.0,210.22 L214.0,210.99 L212.0,211.75 L210.0,212.48 L208.0,213.15 L206.0,213.74 L204.0,214.54 L202.0,215.33 L200.0,215.82 L198.0,216.00Z" fill="#1e1ed8" filter="url(#b2)"/>
<path d="M198.0,207.50 L200.0,205.77 L202.0,205.21 L204.0,204.56 L206.0,203.82 L208.0,203.01 L210.0,202.14 L212.0,201.22 L214.0,200.25 L216.0,199.25 L218.0,198.22 L220.0,197.18 L222.0,196.30 L224.0,195.36 L226.0,194.37 L228.0,193.33 L230.0,192.26 L232.0,191.19 L234.0,190.11 L236.0,189.06 L238.0,188.03 L240.0,187.05 L242.0,186.12 L244.0,185.27 L246.0,184.50 L248.0,183.77 L250.0,183.07 L252.0,182.41 L254.0,181.78 L256.0,181.18 L258.0,180.63 L260.0,180.10 L262.0,179.68 L264.0,179.29 L266.0,178.95 L268.0,178.64 L270.0,178.38 L272.0,178.16 L274.0,177.98 L276.0,177.86 L278.0,177.77 L280.0,177.73 L282.0,177.72 L284.0,177.74 L286.0,177.79 L288.0,177.87 L290.0,177.97 L292.0,178.10 L294.0,178.24 L296.0,178.39 L298.0,178.58 L300.0,178.80 L302.0,179.03 L304.0,179.29 L306.0,179.57 L308.0,179.88 L310.0,180.20 L312.0,180.55 L314.0,180.92 L316.0,181.31 L318.0,181.71 L320.0,182.12 L322.0,182.57 L324.0,183.06 L326.0,183.59 L328.0,184.14 L330.0,184.72 L332.0,185.31 L334.0,185.90 L336.0,186.49 L338.0,187.07 L340.0,187.63 L342.0,188.17 L344.0,188.67 L346.0,189.14 L348.0,189.60 L350.0,190.05 L352.0,190.50 L354.0,190.94 L356.0,191.36 L358.0,191.77 L360.0,192.16 L362.0,192.52 L364.0,192.86 L366.0,193.17 L368.0,193.45 L370.0,193.69 L372.0,193.89 L374.0,194.07 L376.0,194.21 L378.0,194.32 L380.0,194.41 L382.0,194.41 L384.0,194.39 L386.0,194.35 L388.0,194.29 L390.0,194.22 L392.0,194.14 L394.0,194.05 L396.0,193.95 L398.0,193.82 L400.0,193.68 L402.0,193.52 L404.0,193.34 L406.0,193.14 L408.0,192.93 L410.0,192.71 L412.0,192.48 L414.0,192.24 L416.0,192.00 L418.0,191.75 L420.0,191.50 L422.0,191.24 L424.0,190.97 L426.0,190.69 L428.0,190.39 L430.0,190.09 L432.0,189.78 L434.0,189.47 L436.0,189.15 L438.0,188.84 L440.0,188.52 L442.0,188.21 L444.0,187.90 L446.0,187.60 L448.0,187.28 L450.0,186.95 L452.0,186.62 L454.0,186.28 L456.0,185.94 L458.0,185.61 L460.0,185.28 L462.0,184.98 L464.0,184.69 L466.0,184.43 L468.0,184.20 L470.0,184.00 L472.0,183.68 L474.0,183.37 L476.0,183.07 L478.0,182.78 L480.0,182.52 L482.0,182.27 L484.0,182.06 L486.0,181.87 L488.0,181.71 L490.0,181.59 L492.0,181.51 L494.0,181.47 L496.0,181.47 L498.0,181.50 L500.0,181.55 L502.0,181.62 L504.0,181.73 L506.0,181.85 L508.0,181.97 L510.0,182.14 L512.0,182.35 L514.0,182.62 L516.0,182.94 L518.0,183.31 L520.0,183.75 L522.0,184.26 L524.0,184.85 L526.0,185.51 L528.0,186.24 L530.0,187.01 L532.0,187.87 L534.0,188.77 L536.0,189.69 L538.0,190.62 L540.0,191.56 L542.0,192.50 L544.0,193.42 L546.0,194.33 L548.0,195.29 L550.0,196.28 L552.0,197.37 L554.0,198.47 L556.0,199.58 L558.0,200.69 L560.0,201.78 L562.0,202.84 L564.0,203.86 L566.0,204.83 L568.0,205.73 L570.0,206.56 L572.0,208.14 L574.0,209.45 L576.0,210.59 L578.0,211.67 L580.0,212.77 L582.0,214.00 L584.0,215.55 L586.0,217.26 L588.0,219.00 L590.0,220.63 L592.0,222.01 L594.0,223.00 L594.0,225.50 L592.0,224.51 L590.0,223.38 L588.0,222.56 L586.0,221.65 L584.0,220.67 L582.0,219.63 L580.0,218.55 L578.0,217.44 L576.0,216.31 L574.0,215.19 L572.0,214.08 L570.0,213.00 L568.0,211.96 L566.0,210.89 L564.0,209.78 L562.0,208.66 L560.0,207.52 L558.0,206.43 L556.0,205.34 L554.0,204.25 L552.0,203.18 L550.0,202.12 L548.0,201.10 L546.0,200.11 L544.0,199.15 L542.0,198.21 L540.0,197.28 L538.0,196.36 L536.0,195.46 L534.0,194.57 L532.0,193.71 L530.0,192.86 L528.0,192.04 L526.0,191.24 L524.0,190.46 L522.0,189.72 L520.0,189.00 L518.0,188.34 L516.0,187.68 L514.0,187.02 L512.0,186.37 L510.0,185.75 L508.0,185.16 L506.0,184.61 L504.0,184.23 L502.0,184.12 L500.0,184.05 L498.0,184.00 L496.0,183.97 L494.0,183.97 L492.0,184.01 L490.0,184.09 L488.0,184.21 L486.0,184.37 L484.0,184.56 L482.0,184.77 L480.0,185.02 L478.0,185.28 L476.0,185.57 L474.0,185.87 L472.0,186.18 L470.0,186.50 L468.0,186.92 L466.0,187.39 L464.0,187.88 L462.0,188.40 L460.0,188.94 L458.0,189.49 L456.0,190.04 L454.0,190.58 L452.0,191.11 L450.0,191.62 L448.0,192.10 L446.0,192.54 L444.0,192.95 L442.0,193.33 L440.0,193.70 L438.0,194.05 L436.0,194.39 L434.0,194.71 L432.0,195.01 L430.0,195.30 L428.0,195.57 L426.0,195.83 L424.0,196.07 L422.0,196.29 L420.0,196.50 L418.0,196.70 L416.0,196.88 L414.0,197.06 L412.0,197.22 L410.0,197.37 L408.0,197.50 L406.0,197.61 L404.0,197.70 L402.0,197.76 L400.0,197.80 L398.0,197.80 L396.0,197.78 L394.0,197.72 L392.0,197.63 L390.0,197.53 L388.0,197.40 L386.0,197.24 L384.0,197.06 L382.0,196.91 L380.0,196.91 L378.0,196.82 L376.0,196.71 L374.0,196.57 L372.0,196.39 L370.0,196.19 L368.0,195.95 L366.0,195.67 L364.0,195.36 L362.0,195.02 L360.0,194.66 L358.0,194.27 L356.0,193.86 L354.0,193.44 L352.0,193.00 L350.0,192.55 L348.0,192.10 L346.0,191.64 L344.0,191.17 L342.0,190.67 L340.0,190.13 L338.0,189.57 L336.0,188.99 L334.0,188.40 L332.0,187.81 L330.0,187.22 L328.0,186.64 L326.0,186.09 L324.0,185.56 L322.0,185.07 L320.0,184.62 L318.0,184.21 L316.0,183.81 L314.0,183.42 L312.0,183.19 L310.0,183.15 L308.0,183.16 L306.0,183.22 L304.0,183.31 L302.0,183.46 L300.0,183.64 L298.0,183.87 L296.0,184.15 L294.0,184.47 L292.0,184.86 L290.0,185.32 L288.0,185.84 L286.0,186.41 L284.0,187.02 L282.0,187.67 L280.0,188.34 L278.0,189.03 L276.0,189.73 L274.0,190.43 L272.0,191.12 L270.0,191.80 L268.0,192.49 L266.0,193.21 L264.0,193.96 L262.0,194.73 L260.0,195.51 L258.0,196.29 L256.0,197.07 L254.0,197.85 L252.0,198.61 L250.0,199.35 L248.0,199.96 L246.0,200.53 L244.0,201.06 L242.0,201.55 L240.0,202.02 L238.0,202.46 L236.0,202.88 L234.0,203.28 L232.0,203.67 L230.0,204.06 L228.0,204.44 L226.0,204.82 L224.0,205.22 L222.0,205.62 L220.0,206.04 L218.0,206.77 L216.0,207.54 L214.0,208.33 L212.0,209.12 L210.0,209.87 L208.0,210.56 L206.0,211.17 L204.0,211.99 L202.0,212.79 L200.0,213.30 L198.0,213.50Z" fill="#6626c8" filter="url(#b2)"/></g>
<path d="M198.0,203.00 L200.0,201.25 L202.0,200.68 L204.0,200.01 L206.0,199.26 L208.0,198.43 L210.0,197.55 L212.0,196.61 L214.0,195.62 L216.0,194.60 L218.0,193.56 L220.0,192.50 L222.0,191.61 L224.0,190.65 L226.0,189.64 L228.0,188.59 L230.0,187.51 L232.0,186.41 L234.0,185.32 L236.0,184.25 L238.0,183.21 L240.0,182.21 L242.0,181.27 L244.0,180.40 L246.0,179.61 L248.0,178.87 L250.0,178.15 L252.0,177.47 L254.0,176.83 L256.0,176.22 L258.0,175.64 L260.0,175.10 L262.0,174.60 L264.0,174.14 L266.0,173.72 L268.0,173.34 L270.0,173.00 L272.0,172.71 L274.0,172.46 L276.0,172.26 L278.0,172.10 L280.0,171.98 L282.0,171.89 L284.0,171.84 L286.0,171.82 L288.0,171.82 L290.0,171.85 L292.0,171.90 L294.0,171.96 L296.0,172.04 L298.0,172.16 L300.0,172.30 L302.0,172.47 L304.0,172.66 L306.0,172.88 L308.0,173.13 L310.0,173.39 L312.0,173.68 L314.0,173.98 L316.0,174.31 L318.0,174.65 L320.0,175.00 L322.0,175.38 L324.0,175.81 L326.0,176.28 L328.0,176.77 L330.0,177.28 L332.0,177.81 L334.0,178.34 L336.0,178.86 L338.0,179.38 L340.0,179.88 L342.0,180.35 L344.0,180.79 L346.0,181.20 L348.0,181.60 L350.0,181.99 L352.0,182.38 L354.0,182.75 L356.0,183.11 L358.0,183.46 L360.0,183.78 L362.0,184.09 L364.0,184.36 L366.0,184.61 L368.0,184.82 L370.0,185.00 L372.0,185.14 L374.0,185.25 L376.0,185.33 L378.0,185.38 L380.0,185.41 L382.0,185.41 L384.0,185.39 L386.0,185.35 L388.0,185.29 L390.0,185.22 L392.0,185.14 L394.0,185.05 L396.0,184.95 L398.0,184.82 L400.0,184.68 L402.0,184.52 L404.0,184.34 L406.0,184.14 L408.0,183.93 L410.0,183.71 L412.0,183.48 L414.0,183.24 L416.0,183.00 L418.0,182.75 L420.0,182.50 L422.0,182.24 L424.0,181.97 L426.0,181.69 L428.0,181.39 L430.0,181.09 L432.0,180.78 L434.0,180.47 L436.0,180.15 L438.0,179.84 L440.0,179.52 L442.0,179.21 L444.0,178.90 L446.0,178.60 L448.0,178.28 L450.0,177.95 L452.0,177.62 L454.0,177.28 L456.0,176.94 L458.0,176.61 L460.0,176.28 L462.0,175.98 L464.0,175.69 L466.0,175.43 L468.0,175.20 L470.0,175.00 L472.0,174.82 L474.0,174.65 L476.0,174.50 L478.0,174.36 L480.0,174.23 L482.0,174.13 L484.0,174.06 L486.0,174.01 L488.0,173.99 L490.0,174.02 L492.0,174.08 L494.0,174.18 L496.0,174.33 L498.0,174.50 L500.0,174.69 L502.0,174.91 L504.0,175.16 L506.0,175.45 L508.0,175.77 L510.0,176.14 L512.0,176.55 L514.0,177.02 L516.0,177.54 L518.0,178.11 L520.0,178.75 L522.0,179.46 L524.0,180.25 L526.0,181.11 L528.0,182.04 L530.0,183.01 L532.0,184.02 L534.0,185.07 L536.0,186.14 L538.0,187.22 L540.0,188.31 L542.0,189.40 L544.0,190.47 L546.0,191.53 L548.0,192.64 L550.0,193.78 L552.0,194.96 L554.0,196.16 L556.0,197.36 L558.0,198.56 L560.0,199.75 L562.0,200.90 L564.0,202.02 L566.0,203.08 L568.0,204.08 L570.0,205.00 L572.0,206.67 L574.0,208.07 L576.0,209.31 L578.0,210.48 L580.0,211.68 L582.0,213.00 L582.0,215.50 L580.0,214.27 L578.0,213.17 L576.0,212.09 L574.0,210.95 L572.0,209.64 L570.0,208.06 L568.0,207.23 L566.0,206.33 L564.0,205.36 L562.0,204.34 L560.0,203.28 L558.0,202.19 L556.0,201.08 L554.0,199.97 L552.0,198.87 L550.0,197.78 L548.0,196.79 L546.0,195.83 L544.0,194.92 L542.0,194.00 L540.0,193.06 L538.0,192.12 L536.0,191.19 L534.0,190.27 L532.0,189.37 L530.0,188.51 L528.0,187.74 L526.0,187.01 L524.0,186.35 L522.0,185.76 L520.0,185.25 L518.0,184.81 L516.0,184.44 L514.0,184.12 L512.0,183.85 L510.0,183.64 L508.0,183.47 L506.0,183.35 L504.0,183.23 L502.0,183.12 L500.0,183.05 L498.0,183.00 L496.0,182.97 L494.0,182.97 L492.0,183.01 L490.0,183.09 L488.0,183.21 L486.0,183.37 L484.0,183.56 L482.0,183.77 L480.0,184.02 L478.0,184.28 L476.0,184.57 L474.0,184.87 L472.0,185.18 L470.0,185.50 L468.0,185.70 L466.0,185.93 L464.0,186.19 L462.0,186.48 L460.0,186.78 L458.0,187.11 L456.0,187.44 L454.0,187.78 L452.0,188.12 L450.0,188.45 L448.0,188.78 L446.0,189.10 L444.0,189.40 L442.0,189.71 L440.0,190.02 L438.0,190.34 L436.0,190.65 L434.0,190.97 L432.0,191.28 L430.0,191.59 L428.0,191.89 L426.0,192.19 L424.0,192.47 L422.0,192.74 L420.0,193.00 L418.0,193.25 L416.0,193.50 L414.0,193.74 L412.0,193.98 L410.0,194.21 L408.0,194.43 L406.0,194.64 L404.0,194.84 L402.0,195.02 L400.0,195.18 L398.0,195.32 L396.0,195.45 L394.0,195.55 L392.0,195.64 L390.0,195.72 L388.0,195.79 L386.0,195.85 L384.0,195.89 L382.0,195.91 L380.0,195.91 L378.0,195.82 L376.0,195.71 L374.0,195.57 L372.0,195.39 L370.0,195.19 L368.0,194.95 L366.0,194.67 L364.0,194.36 L362.0,194.02 L360.0,193.66 L358.0,193.27 L356.0,192.86 L354.0,192.44 L352.0,192.00 L350.0,191.55 L348.0,191.10 L346.0,190.64 L344.0,190.17 L342.0,189.67 L340.0,189.13 L338.0,188.57 L336.0,187.99 L334.0,187.40 L332.0,186.81 L330.0,186.22 L328.0,185.64 L326.0,185.09 L324.0,184.56 L322.0,184.07 L320.0,183.62 L318.0,183.21 L316.0,182.81 L314.0,182.42 L312.0,182.05 L310.0,181.70 L308.0,181.38 L306.0,181.07 L304.0,180.79 L302.0,180.53 L300.0,180.30 L298.0,180.08 L296.0,179.89 L294.0,179.74 L292.0,179.60 L290.0,179.47 L288.0,179.37 L286.0,179.29 L284.0,179.24 L282.0,179.22 L280.0,179.23 L278.0,179.27 L276.0,179.36 L274.0,179.48 L272.0,179.66 L270.0,179.88 L268.0,180.14 L266.0,180.45 L264.0,180.79 L262.0,181.18 L260.0,181.60 L258.0,182.13 L256.0,182.68 L254.0,183.28 L252.0,183.91 L250.0,184.57 L248.0,185.27 L246.0,186.00 L244.0,186.77 L242.0,187.62 L240.0,188.55 L238.0,189.53 L236.0,190.56 L234.0,191.61 L232.0,192.69 L230.0,193.76 L228.0,194.83 L226.0,195.87 L224.0,196.86 L222.0,197.80 L220.0,198.68 L218.0,199.72 L216.0,200.75 L214.0,201.75 L212.0,202.72 L210.0,203.64 L208.0,204.51 L206.0,205.32 L204.0,206.06 L202.0,206.71 L200.0,207.27 L198.0,209.00Z" fill="#ec1414" filter="url(#b2)"/>
</g>
</svg>
<div class="t" style="left:9.60px;top:105.30px;font-size:4.8px;line-height:4.8px;font-weight:700;color:#fff;">N</div>
<div class="t" style="left:185.60px;top:105.90px;font-size:4.6px;line-height:4.6px;font-weight:700;color:#fff;">T</div>
<svg style="position:absolute;left:18.00px;top:103.00px" width="11.60" height="11.60"><circle cx="5.8" cy="5.8" r="4.3999999999999995" fill="none" stroke="#2020d0" stroke-width="0.8"/></svg>
<div class="t" style="left:-76.20px;width:200px;text-align:center;top:107.55px;font-size:4.5px;line-height:4.5px;font-weight:700;color:#2020d0;">A</div>
<div class="t" style="left:9.60px;top:192.50px;font-size:4.8px;line-height:4.8px;font-weight:700;color:#fff;">N</div>
<div class="t" style="left:185.60px;top:192.60px;font-size:4.6px;line-height:4.6px;font-weight:700;color:#fff;">T</div>
<svg style="position:absolute;left:18.00px;top:189.20px" width="11.60" height="11.60"><circle cx="5.8" cy="5.8" r="4.3999999999999995" fill="none" stroke="#d01818" stroke-width="0.8"/></svg>
<div class="t" style="left:-76.20px;width:200px;text-align:center;top:193.75px;font-size:4.5px;line-height:4.5px;font-weight:700;color:#d01818;">B</div>
<div style="position:absolute;left:199px;top:238px;width:16px;height:13px;background:#e1e1e1;border:0.6px solid #cfcfcf;box-sizing:border-box"></div>
<div style="position:absolute;left:216px;top:238px;width:16px;height:13px;background:#e1e1e1;border:0.6px solid #cfcfcf;box-sizing:border-box"></div>
<div style="position:absolute;left:232.5px;top:238px;width:16px;height:13px;background:#cce4f7;border:0.8px solid #7ab6ea;box-sizing:border-box"></div>
<svg style="position:absolute;left:199px;top:238px" width="50" height="13"><path d="M6 3.6 L10 6.5 L6 9.4 Z" fill="#111"/><rect x="22.5" y="4" width="4.8" height="4.8" fill="#111"/><path d="M42.6 4.0 A3 3 0 1 1 38.6 4.4" fill="none" stroke="#111" stroke-width="1.1"/><path d="M37.5 2.9 L40.5 3.3 L38.4 5.9 Z" fill="#111"/></svg>
<div style="position:absolute;left:251px;top:241px;width:338px;height:1px;background:#dedede"></div>
<div style="position:absolute;left:251px;top:246.5px;width:338px;height:0.6px;background:#e2e2e2"></div>
<svg style="position:absolute;left:399px;top:237px" width="8" height="11"><path d="M1.6 1.6 H6.6 V7.5 L4.1 9.6 L1.6 7.5 Z" fill="#1e7ad6" stroke="#4090e0" stroke-width="0.4"/></svg>
<div class="t" style="left:575.50px;top:242.10px;font-size:4.6px;line-height:4.6px;color:#222;">15.25 ms</div>
<svg style="position:absolute;left:589px;top:244px" width="6" height="6"><path d="M1 5 L5 5 L5 1 Z" fill="#e8c800"/></svg>
<div style="position:absolute;left:598px;top:99px;width:197px;height:154px;background:#fff;border:1px solid #dadada;box-sizing:border-box"></div>
<div class="t" style="left:597.50px;width:200px;text-align:center;top:103.60px;font-size:6.8px;line-height:6.8px;font-weight:700;color:#1a1a1a;">SSI</div>
<svg style="position:absolute;left:0;top:0" width="800" height="450">
<line x1="634" y1="126.8" x2="764" y2="126.8" stroke="#d4d4d4" stroke-width="0.8"/>
<line x1="634" y1="142.1" x2="764" y2="142.1" stroke="#d4d4d4" stroke-width="0.8"/>
<line x1="634" y1="157.7" x2="764" y2="157.7" stroke="#d4d4d4" stroke-width="0.8"/>
<line x1="634" y1="173.2" x2="764" y2="173.2" stroke="#d4d4d4" stroke-width="0.8"/>
<line x1="634" y1="113.5" x2="634" y2="188.5" stroke="#333" stroke-width="0.8"/>
<line x1="633.6" y1="188.3" x2="764" y2="188.3" stroke="#333" stroke-width="0.8"/>
<path d="M631.7 116.5 L634 112.8 L636.3 116.5" fill="none" stroke="#333" stroke-width="0.8"/>
<path d="M761 186 L764.6 188.3 L761 190.6" fill="none" stroke="#333" stroke-width="0.8"/>
<line x1="668.9" y1="187.3" x2="668.9" y2="189.3" stroke="#333" stroke-width="0.6"/>
<line x1="703.8" y1="187.3" x2="703.8" y2="189.3" stroke="#333" stroke-width="0.6"/>
<line x1="738.4" y1="187.3" x2="738.4" y2="189.3" stroke="#333" stroke-width="0.6"/>
<line x1="632.5" y1="126.8" x2="634" y2="126.8" stroke="#333" stroke-width="0.6"/>
<line x1="632.5" y1="142.1" x2="634" y2="142.1" stroke="#333" stroke-width="0.6"/>
<line x1="632.5" y1="157.7" x2="634" y2="157.7" stroke="#333" stroke-width="0.6"/>
<line x1="632.5" y1="173.2" x2="634" y2="173.2" stroke="#333" stroke-width="0.6"/>
<line x1="632.5" y1="188.3" x2="634" y2="188.3" stroke="#333" stroke-width="0.6"/>
<path d="M634.00,188.30 L634.50,188.28 L635.00,188.25 L635.50,188.23 L636.00,188.21 L636.50,188.18 L637.00,188.16 L637.50,188.13 L638.00,188.11 L638.50,188.09 L639.00,188.06 L639.50,188.04 L640.00,188.01 L640.50,187.99 L641.00,187.97 L641.50,187.94 L642.00,187.92 L642.50,187.89 L643.00,187.87 L643.50,187.84 L644.00,187.82 L644.50,187.79 L645.00,187.77 L645.50,187.74 L646.00,187.72 L646.50,187.69 L647.00,187.67 L647.50,187.64 L648.00,187.61 L648.50,187.59 L649.00,187.56 L649.50,187.54 L650.00,187.51 L650.50,187.48 L651.00,187.45 L651.50,187.43 L652.00,187.40 L652.50,187.37 L653.00,187.34 L653.50,187.32 L654.00,187.29 L654.50,187.26 L655.00,187.23 L655.50,187.20 L656.00,187.17 L656.50,187.14 L657.00,187.11 L657.50,187.08 L658.00,187.05 L658.50,187.02 L659.00,186.98 L659.50,186.95 L660.00,186.92 L660.50,186.88 L661.00,186.85 L661.50,186.82 L662.00,186.78 L662.50,186.75 L663.00,186.71 L663.50,186.67 L664.00,186.64 L664.50,186.60 L665.00,186.56 L665.50,186.52 L666.00,186.48 L666.50,186.44 L667.00,186.40 L667.50,186.35 L668.00,186.31 L668.50,186.26 L669.00,186.22 L669.50,186.17 L670.00,186.12 L670.50,186.07 L671.00,186.02 L671.50,185.97 L672.00,185.92 L672.50,185.87 L673.00,185.81 L673.50,185.75 L674.00,185.69 L674.50,185.63 L675.00,185.57 L675.50,185.51 L676.00,185.44 L676.50,185.37 L677.00,185.30 L677.50,185.23 L678.00,185.16 L678.50,185.08 L679.00,185.00 L679.50,184.92 L680.00,184.83 L680.50,184.75 L681.00,184.66 L681.50,184.56 L682.00,184.47 L682.50,184.37 L683.00,184.27 L683.50,184.16 L684.00,184.05 L684.50,183.93 L685.00,183.81 L685.50,183.69 L686.00,183.56 L686.50,183.43 L687.00,183.29 L687.50,183.15 L688.00,183.00 L688.50,182.85 L689.00,182.69 L689.50,182.52 L690.00,182.35 L690.50,182.17 L691.00,181.99 L691.50,181.79 L692.00,181.59 L692.50,181.38 L693.00,181.17 L693.50,180.94 L694.00,180.70 L694.50,180.46 L695.00,180.20 L695.50,179.94 L696.00,179.66 L696.50,179.37 L697.00,179.07 L697.50,178.76 L698.00,178.43 L698.50,178.09 L699.00,177.74 L699.50,177.37 L700.00,176.98 L700.50,176.58 L701.00,176.17 L701.50,175.73 L702.00,175.27 L702.50,174.80 L703.00,174.31 L703.50,173.79 L704.00,173.25 L704.50,172.69 L705.00,172.10 L705.50,171.49 L706.00,170.86 L706.50,170.19 L707.00,169.50 L707.50,168.77 L708.00,168.01 L708.50,167.22 L709.00,166.40 L709.50,165.54 L710.00,164.64 L710.50,163.70 L711.00,162.73 L711.50,161.70 L712.00,160.64 L712.50,159.52 L713.00,158.36 L713.50,157.14 L714.00,155.87 L714.50,154.55 L715.00,153.16 L715.50,151.72 L716.00,150.21 L716.50,148.63 L717.00,146.98 L717.50,145.26 L718.00,143.47 L718.50,141.59 L719.00,139.63 L719.50,137.58 L720.00,135.44 L720.50,133.20 L721.00,130.87 L721.50,128.43 L722.00,125.88 L722.50,123.22 L723.00,120.44 L723.50,117.53 L724.00,114.50 L724.50,112.50" fill="none" stroke="#2222dd" stroke-width="1.25"/>
<path d="M634.00,188.30 L634.50,188.28 L635.00,188.27 L635.50,188.25 L636.00,188.24 L636.50,188.22 L637.00,188.21 L637.50,188.19 L638.00,188.17 L638.50,188.15 L639.00,188.14 L639.50,188.12 L640.00,188.10 L640.50,188.08 L641.00,188.06 L641.50,188.05 L642.00,188.03 L642.50,188.01 L643.00,187.99 L643.50,187.97 L644.00,187.95 L644.50,187.92 L645.00,187.90 L645.50,187.88 L646.00,187.86 L646.50,187.84 L647.00,187.81 L647.50,187.79 L648.00,187.76 L648.50,187.74 L649.00,187.71 L649.50,187.69 L650.00,187.66 L650.50,187.63 L651.00,187.60 L651.50,187.58 L652.00,187.55 L652.50,187.52 L653.00,187.48 L653.50,187.45 L654.00,187.42 L654.50,187.39 L655.00,187.35 L655.50,187.32 L656.00,187.28 L656.50,187.24 L657.00,187.20 L657.50,187.17 L658.00,187.12 L658.50,187.08 L659.00,187.04 L659.50,187.00 L660.00,186.95 L660.50,186.90 L661.00,186.86 L661.50,186.81 L662.00,186.76 L662.50,186.70 L663.00,186.65 L663.50,186.59 L664.00,186.54 L664.50,186.48 L665.00,186.42 L665.50,186.35 L666.00,186.29 L666.50,186.22 L667.00,186.15 L667.50,186.08 L668.00,186.01 L668.50,185.93 L669.00,185.85 L669.50,185.77 L670.00,185.69 L670.50,185.60 L671.00,185.51 L671.50,185.42 L672.00,185.32 L672.50,185.23 L673.00,185.12 L673.50,185.02 L674.00,184.91 L674.50,184.80 L675.00,184.68 L675.50,184.56 L676.00,184.44 L676.50,184.31 L677.00,184.17 L677.50,184.03 L678.00,183.89 L678.50,183.74 L679.00,183.59 L679.50,183.43 L680.00,183.27 L680.50,183.10 L681.00,182.92 L681.50,182.74 L682.00,182.55 L682.50,182.36 L683.00,182.16 L683.50,181.95 L684.00,181.73 L684.50,181.51 L685.00,181.28 L685.50,181.04 L686.00,180.79 L686.50,180.53 L687.00,180.26 L687.50,179.99 L688.00,179.70 L688.50,179.40 L689.00,179.10 L689.50,178.78 L690.00,178.45 L690.50,178.11 L691.00,177.75 L691.50,177.38 L692.00,177.00 L692.50,176.61 L693.00,176.20 L693.50,175.77 L694.00,175.34 L694.50,174.88 L695.00,174.41 L695.50,173.92 L696.00,173.41 L696.50,172.88 L697.00,172.34 L697.50,171.77 L698.00,171.19 L698.50,170.58 L699.00,169.95 L699.50,169.30 L700.00,168.62 L700.50,167.92 L701.00,167.19 L701.50,166.44 L702.00,165.66 L702.50,164.84 L703.00,164.00 L703.50,163.13 L704.00,162.23 L704.50,161.29 L705.00,160.32 L705.50,159.31 L706.00,158.26 L706.50,157.18 L707.00,156.06 L707.50,154.89 L708.00,153.68 L708.50,152.43 L709.00,151.13 L709.50,149.78 L710.00,148.38 L710.50,146.93 L711.00,145.43 L711.50,143.87 L712.00,142.25 L712.50,140.57 L713.00,138.83 L713.50,137.03 L714.00,135.15 L714.50,133.21 L715.00,131.20 L715.50,129.11 L716.00,126.95 L716.50,124.70 L717.00,122.37 L717.50,119.95 L718.00,117.45 L718.50,114.85 L719.00,112.50" fill="none" stroke="#e02020" stroke-width="1.25"/>
</svg>
<div class="t" style="right:169.00px;top:125.50px;font-size:4.6px;line-height:4.6px;color:#333;letter-spacing:-0.1px">0.16</div>
<div class="t" style="right:169.00px;top:140.80px;font-size:4.6px;line-height:4.6px;color:#333;letter-spacing:-0.1px">0.12</div>
<div class="t" style="right:169.00px;top:156.40px;font-size:4.6px;line-height:4.6px;color:#333;letter-spacing:-0.1px">0.08</div>
<div class="t" style="right:169.00px;top:171.90px;font-size:4.6px;line-height:4.6px;color:#333;letter-spacing:-0.1px">0.04</div>
<div class="t" style="right:169.00px;top:187.00px;font-size:4.6px;line-height:4.6px;color:#333;letter-spacing:-0.1px">0.00</div>
<div class="t" style="left:535.00px;width:200px;text-align:center;top:192.20px;font-size:4.0px;line-height:4.0px;color:#222;">0%</div>
<div class="t" style="left:569.90px;width:200px;text-align:center;top:192.20px;font-size:4.0px;line-height:4.0px;color:#222;">2%</div>
<div class="t" style="left:604.80px;width:200px;text-align:center;top:192.20px;font-size:4.0px;line-height:4.0px;color:#222;">4%</div>
<div class="t" style="left:639.40px;width:200px;text-align:center;top:192.20px;font-size:4.0px;line-height:4.0px;color:#222;">6%</div>
<div class="t" style="left:657.00px;width:200px;text-align:center;top:182.90px;font-size:4.6px;line-height:4.6px;font-weight:700;color:#222;">Strain</div>
<div class="t" style="left:567px;top:150px;width:100px;text-align:center;font-size:5px;line-height:5px;font-weight:700;color:#111;transform:rotate(-90deg)">Stress [MPa]</div>
<svg style="position:absolute;left:698.40px;top:115.70px" width="12.00" height="12.00"><circle cx="6" cy="6" r="4.6" fill="none" stroke="#e02828" stroke-width="0.8"/></svg>
<div class="t" style="left:604.40px;width:200px;text-align:center;top:120.40px;font-size:4.6px;line-height:4.6px;font-weight:700;color:#e02828;">B</div>
<svg style="position:absolute;left:729.50px;top:115.70px" width="12.00" height="12.00"><circle cx="6" cy="6" r="4.6" fill="none" stroke="#2828dd" stroke-width="0.8"/></svg>
<div class="t" style="left:635.50px;width:200px;text-align:center;top:120.40px;font-size:4.6px;line-height:4.6px;font-weight:700;color:#2828dd;">A</div>
<svg style="position:absolute;left:0;top:0" width="800" height="450">
<rect x="727" y="236" width="37.5" height="11.5" fill="#d2d2d2"/>
<line x1="651" y1="200" x2="765" y2="200" stroke="#8a8a8a" stroke-width="0.8"/>
<line x1="651" y1="211.5" x2="765" y2="211.5" stroke="#8a8a8a" stroke-width="0.8"/>
<line x1="651" y1="223.5" x2="765" y2="223.5" stroke="#8a8a8a" stroke-width="0.8"/>
<line x1="651" y1="235.5" x2="765" y2="235.5" stroke="#8a8a8a" stroke-width="0.8"/>
<line x1="651" y1="247.5" x2="765" y2="247.5" stroke="#8a8a8a" stroke-width="0.8"/>
<line x1="651.4" y1="200" x2="651.4" y2="247.5" stroke="#8a8a8a" stroke-width="0.8"/>
<line x1="764.5" y1="200" x2="764.5" y2="247.5" stroke="#8a8a8a" stroke-width="0.8"/>
<line x1="708.5" y1="200" x2="708.5" y2="223.5" stroke="#8a8a8a" stroke-width="0.8"/>
<line x1="689.4" y1="235.5" x2="689.4" y2="247.5" stroke="#8a8a8a" stroke-width="0.8"/>
<line x1="726.4" y1="235.5" x2="726.4" y2="247.5" stroke="#8a8a8a" stroke-width="0.8"/>
<rect x="726.6" y="235.8" width="37.6" height="11.4" fill="none" stroke="#f26a12" stroke-width="1.1"/>
</svg>
<div class="t" style="left:625.70px;top:204.20px;font-size:5.6px;line-height:5.6px;font-weight:700;color:#111;">Value:</div>
<div class="t" style="left:625.70px;top:215.80px;font-size:5.6px;line-height:5.6px;font-weight:700;color:#111;">SD:</div>
<div class="t" style="left:625.70px;top:227.80px;font-size:5.6px;line-height:5.6px;font-weight:700;color:#111;">Diff. SD:</div>
<div class="t" style="left:625.70px;top:239.80px;font-size:5.6px;line-height:5.6px;font-weight:700;color:#111;">Change:</div>
<div class="t" style="left:580.00px;width:200px;text-align:center;top:204.15px;font-size:5.3px;line-height:5.3px;color:#333;">0.7</div>
<div class="t" style="left:636.50px;width:200px;text-align:center;top:204.15px;font-size:5.3px;line-height:5.3px;color:#333;">1.0</div>
<div class="t" style="left:580.00px;width:200px;text-align:center;top:215.95px;font-size:5.3px;line-height:5.3px;color:#333;">0.7</div>
<div class="t" style="left:636.50px;width:200px;text-align:center;top:215.95px;font-size:5.3px;line-height:5.3px;color:#333;">1.0</div>
<div class="t" style="left:608.00px;width:200px;text-align:center;top:227.80px;font-size:5.6px;line-height:5.6px;font-weight:700;color:#1a1a1a;">0.3</div>
<div class="t" style="left:570.20px;width:200px;text-align:center;top:239.80px;font-size:5.2px;line-height:5.2px;color:#333;">softer</div>
<div class="t" style="left:608.00px;width:200px;text-align:center;top:239.80px;font-size:5.2px;line-height:5.2px;color:#333;">not sign.</div>
<div class="t" style="left:645.50px;width:200px;text-align:center;top:239.65px;font-size:5.5px;line-height:5.5px;font-weight:700;color:#1a1a1a;">stiffer</div>
<div style="position:absolute;left:4px;top:251px;width:792px;height:1px;background:#fafafa"></div>
<div style="position:absolute;left:4px;top:253px;width:792px;height:1px;background:#d8d8d8"></div>
<div style="position:absolute;left:4px;top:255.5px;width:198px;height:186.8px;background:#fff;border:0.5px solid #e6e6e6;border-bottom:0;box-sizing:border-box"></div>
<div style="position:absolute;left:202px;top:255.5px;width:198px;height:186.8px;background:#f0f0f0;border:0.5px solid #e6e6e6;border-bottom:0;box-sizing:border-box"></div>
<div style="position:absolute;left:400px;top:255.5px;width:198px;height:186.8px;background:#fff;border:0.5px solid #e6e6e6;border-bottom:0;box-sizing:border-box"></div>
<div style="position:absolute;left:598px;top:255.5px;width:197px;height:186.8px;background:#f0f0f0;border:0.5px solid #e6e6e6;border-bottom:0;box-sizing:border-box"></div>
<div style="position:absolute;left:4px;top:96px;width:0.8px;height:346.3px;background:#d2d2d2"></div>
<div class="t" style="left:4.00px;width:200px;text-align:center;top:259.55px;font-size:6.1px;line-height:6.1px;font-weight:700;color:#1a1a1a;">DA Ratio</div>
<div class="t" style="right:770.80px;top:266.05px;font-size:5.7px;line-height:5.7px;font-weight:700;color:#1e1e1e;">soft</div>
<div class="t" style="right:770.40px;top:360.25px;font-size:5.7px;line-height:5.7px;font-weight:700;color:#1e1e1e;">stiff</div>
<div class="t" style="right:751.30px;top:272.15px;font-size:5.1px;line-height:5.1px;color:#2a2a2a;">+3 SD</div>
<div class="t" style="right:751.30px;top:285.60px;font-size:5.1px;line-height:5.1px;color:#2a2a2a;">+2 SD</div>
<div class="t" style="right:751.30px;top:299.05px;font-size:5.1px;line-height:5.1px;color:#2a2a2a;">+1 SD</div>
<div class="t" style="right:751.30px;top:312.50px;font-size:5.1px;line-height:5.1px;color:#2a2a2a;">0 SD</div>
<div class="t" style="right:751.30px;top:325.95px;font-size:5.1px;line-height:5.1px;color:#2a2a2a;">-1 SD</div>
<div class="t" style="right:751.30px;top:339.40px;font-size:5.1px;line-height:5.1px;color:#2a2a2a;">-2 SD</div>
<div class="t" style="right:751.30px;top:352.85px;font-size:5.1px;line-height:5.1px;color:#2a2a2a;">-3 SD</div>
<svg style="position:absolute;left:0;top:0" width="800" height="450"><rect x="51" y="273.6" width="114" height="80.70" fill="#fff"/><rect x="51" y="273.60" width="114" height="13.45" fill="#b3b3b3"/><rect x="51" y="287.05" width="114" height="13.45" fill="#ececec"/><rect x="51" y="327.40" width="114" height="13.45" fill="#ececec"/><rect x="51" y="340.85" width="114" height="13.45" fill="#b3b3b3"/><path d="M51.5 354.3 V274.0 H164.7 V354.3" fill="none" stroke="#858585" stroke-width="0.9"/><line x1="49.5" y1="354.1" x2="165" y2="354.1" stroke="#7a7a7a" stroke-width="0.9"/><line x1="49.4" y1="273.60" x2="51" y2="273.60" stroke="#555" stroke-width="0.8"/><line x1="49.4" y1="287.05" x2="51" y2="287.05" stroke="#555" stroke-width="0.8"/><line x1="49.4" y1="300.50" x2="51" y2="300.50" stroke="#555" stroke-width="0.8"/><line x1="49.4" y1="313.95" x2="51" y2="313.95" stroke="#555" stroke-width="0.8"/><line x1="49.4" y1="327.40" x2="51" y2="327.40" stroke="#555" stroke-width="0.8"/><line x1="49.4" y1="340.85" x2="51" y2="340.85" stroke="#555" stroke-width="0.8"/><line x1="49.4" y1="354.30" x2="51" y2="354.30" stroke="#555" stroke-width="0.8"/><line x1="107.6" y1="274.6" x2="107.6" y2="354.3" stroke="#333" stroke-width="0.7" stroke-dasharray="0.9 1.1"/><line x1="49.5" y1="280.6" x2="71.7" y2="280.6" stroke="#1212c0" stroke-width="1.35"/><line x1="86.7" y1="280.6" x2="107.6" y2="280.6" stroke="#1212c0" stroke-width="1.35"/><line x1="107.6" y1="300.2" x2="128" y2="300.2" stroke="#e01010" stroke-width="1.35"/><line x1="144" y1="300.2" x2="166.5" y2="300.2" stroke="#e01010" stroke-width="1.35"/><rect x="127.20" y="422.3" width="37.80" height="17.40" fill="#d2d2d2"/><line x1="51" y1="370.7" x2="165" y2="370.7" stroke="#858585" stroke-width="0.9"/><line x1="51" y1="388.1" x2="165" y2="388.1" stroke="#858585" stroke-width="0.9"/><line x1="51" y1="405.3" x2="165" y2="405.3" stroke="#858585" stroke-width="0.9"/><line x1="51" y1="422.3" x2="165" y2="422.3" stroke="#858585" stroke-width="0.9"/><line x1="51" y1="439.7" x2="165" y2="439.7" stroke="#858585" stroke-width="0.9"/><line x1="51.4" y1="370.7" x2="51.4" y2="439.7" stroke="#858585" stroke-width="0.9"/><line x1="164.6" y1="370.7" x2="164.6" y2="439.7" stroke="#858585" stroke-width="0.9"/><line x1="107.6" y1="370.7" x2="107.6" y2="405.3" stroke="#858585" stroke-width="0.9"/><line x1="89.1" y1="422.3" x2="89.1" y2="439.7" stroke="#858585" stroke-width="0.9"/><line x1="127.2" y1="422.3" x2="127.2" y2="439.7" stroke="#858585" stroke-width="0.9"/><rect x="127.50" y="422.6" width="37.20" height="16.80" fill="none" stroke="#f26a12" stroke-width="1.2"/></svg>
<div class="t" style="left:-20.80px;width:200px;text-align:center;top:279.10px;font-size:5.4px;line-height:5.4px;color:#2020c0;">5.3</div>
<div class="t" style="left:36.00px;width:200px;text-align:center;top:298.70px;font-size:5.4px;line-height:5.4px;color:#d02020;">4.7</div>
<svg style="position:absolute;left:71.10px;top:356.20px" width="12.40" height="12.40"><circle cx="6.2" cy="6.2" r="4.7250000000000005" fill="none" stroke="#2a2ad8" stroke-width="0.95"/></svg>
<div class="t" style="left:-22.70px;width:200px;text-align:center;top:360.70px;font-size:5.4px;line-height:5.4px;font-weight:700;color:#2a2ad8;">A</div>
<svg style="position:absolute;left:127.80px;top:356.20px" width="12.40" height="12.40"><circle cx="6.2" cy="6.2" r="4.7250000000000005" fill="none" stroke="#e83838" stroke-width="0.95"/></svg>
<div class="t" style="left:34.00px;width:200px;text-align:center;top:360.70px;font-size:5.4px;line-height:5.4px;font-weight:700;color:#e83838;">B</div>
<div class="t" style="left:24.70px;top:377.00px;font-size:6.0px;line-height:6.0px;font-weight:700;color:#111;">Value:</div>
<div class="t" style="left:24.70px;top:394.00px;font-size:6.0px;line-height:6.0px;font-weight:700;color:#111;">SD:</div>
<div class="t" style="left:24.70px;top:407.60px;font-size:6.0px;line-height:6.0px;font-weight:700;color:#111;">Diff. SD:</div>
<div class="t" style="left:28.20px;top:416.65px;font-size:5.3px;line-height:5.3px;color:#333;">(B - A)</div>
<div class="t" style="left:24.70px;top:428.40px;font-size:6.0px;line-height:6.0px;font-weight:700;color:#111;">Change:</div>
<div class="t" style="left:-20.70px;width:200px;text-align:center;top:378.15px;font-size:5.1px;line-height:5.1px;color:#333;">5.3</div>
<div class="t" style="left:36.30px;width:200px;text-align:center;top:378.15px;font-size:5.1px;line-height:5.1px;color:#333;">4.7</div>
<div class="t" style="left:-20.70px;width:200px;text-align:center;top:394.55px;font-size:5.1px;line-height:5.1px;color:#333;">2.5</div>
<div class="t" style="left:36.30px;width:200px;text-align:center;top:394.55px;font-size:5.1px;line-height:5.1px;color:#333;">1.0</div>
<div class="t" style="left:8.00px;width:200px;text-align:center;top:411.35px;font-size:5.1px;line-height:5.1px;color:#333;">-1.5</div>
<div class="t" style="left:-29.95px;width:200px;text-align:center;top:428.65px;font-size:5.3px;line-height:5.3px;color:#333;">softer</div>
<div class="t" style="left:8.15px;width:200px;text-align:center;top:428.65px;font-size:5.3px;line-height:5.3px;color:#333;">not sign.</div>
<div class="t" style="left:46.10px;width:200px;text-align:center;top:428.50px;font-size:5.6px;line-height:5.6px;font-weight:700;color:#1a1a1a;">stiffer</div>
<div class="t" style="left:201.00px;width:200px;text-align:center;top:259.55px;font-size:6.1px;line-height:6.1px;font-weight:700;color:#1a1a1a;">Integr. Radius</div>
<div class="t" style="right:573.80px;top:266.05px;font-size:5.7px;line-height:5.7px;font-weight:700;color:#1e1e1e;">soft</div>
<div class="t" style="right:573.40px;top:360.25px;font-size:5.7px;line-height:5.7px;font-weight:700;color:#1e1e1e;">stiff</div>
<div class="t" style="right:554.30px;top:272.15px;font-size:5.1px;line-height:5.1px;color:#2a2a2a;">+6 SD</div>
<div class="t" style="right:554.30px;top:285.60px;font-size:5.1px;line-height:5.1px;color:#2a2a2a;">+5 SD</div>
<div class="t" style="right:554.30px;top:299.05px;font-size:5.1px;line-height:5.1px;color:#2a2a2a;">+4 SD</div>
<div class="t" style="right:554.30px;top:312.50px;font-size:5.1px;line-height:5.1px;color:#2a2a2a;">+3 SD</div>
<div class="t" style="right:554.30px;top:325.95px;font-size:5.1px;line-height:5.1px;color:#2a2a2a;">+2 SD</div>
<div class="t" style="right:554.30px;top:339.40px;font-size:5.1px;line-height:5.1px;color:#2a2a2a;">+1 SD</div>
<div class="t" style="right:554.30px;top:352.85px;font-size:5.1px;line-height:5.1px;color:#2a2a2a;">0 SD</div>
<svg style="position:absolute;left:0;top:0" width="800" height="450"><rect x="248" y="273.6" width="114" height="80.70" fill="#fff"/><rect x="248" y="273.60" width="114" height="53.80" fill="#b3b3b3"/><rect x="248" y="327.40" width="114" height="13.45" fill="#ececec"/><path d="M248.5 354.3 V274.0 H361.7 V354.3" fill="none" stroke="#858585" stroke-width="0.9"/><line x1="246.5" y1="354.1" x2="362" y2="354.1" stroke="#7a7a7a" stroke-width="0.9"/><line x1="246.4" y1="273.60" x2="248" y2="273.60" stroke="#555" stroke-width="0.8"/><line x1="246.4" y1="287.05" x2="248" y2="287.05" stroke="#555" stroke-width="0.8"/><line x1="246.4" y1="300.50" x2="248" y2="300.50" stroke="#555" stroke-width="0.8"/><line x1="246.4" y1="313.95" x2="248" y2="313.95" stroke="#555" stroke-width="0.8"/><line x1="246.4" y1="327.40" x2="248" y2="327.40" stroke="#555" stroke-width="0.8"/><line x1="246.4" y1="340.85" x2="248" y2="340.85" stroke="#555" stroke-width="0.8"/><line x1="246.4" y1="354.30" x2="248" y2="354.30" stroke="#555" stroke-width="0.8"/><line x1="304.6" y1="274.6" x2="304.6" y2="354.3" stroke="#333" stroke-width="0.7" stroke-dasharray="0.9 1.1"/><line x1="246.5" y1="292.3" x2="268.7" y2="292.3" stroke="#1212c0" stroke-width="1.35"/><line x1="283.7" y1="292.3" x2="304.6" y2="292.3" stroke="#1212c0" stroke-width="1.35"/><line x1="304.6" y1="303.5" x2="325" y2="303.5" stroke="#e01010" stroke-width="1.35"/><line x1="341" y1="303.5" x2="363.5" y2="303.5" stroke="#e01010" stroke-width="1.35"/><rect x="324.20" y="422.3" width="37.80" height="17.40" fill="#d2d2d2"/><line x1="248" y1="370.7" x2="362" y2="370.7" stroke="#858585" stroke-width="0.9"/><line x1="248" y1="388.1" x2="362" y2="388.1" stroke="#858585" stroke-width="0.9"/><line x1="248" y1="405.3" x2="362" y2="405.3" stroke="#858585" stroke-width="0.9"/><line x1="248" y1="422.3" x2="362" y2="422.3" stroke="#858585" stroke-width="0.9"/><line x1="248" y1="439.7" x2="362" y2="439.7" stroke="#858585" stroke-width="0.9"/><line x1="248.4" y1="370.7" x2="248.4" y2="439.7" stroke="#858585" stroke-width="0.9"/><line x1="361.6" y1="370.7" x2="361.6" y2="439.7" stroke="#858585" stroke-width="0.9"/><line x1="304.6" y1="370.7" x2="304.6" y2="405.3" stroke="#858585" stroke-width="0.9"/><line x1="286.1" y1="422.3" x2="286.1" y2="439.7" stroke="#858585" stroke-width="0.9"/><line x1="324.2" y1="422.3" x2="324.2" y2="439.7" stroke="#858585" stroke-width="0.9"/><rect x="324.50" y="422.6" width="37.20" height="16.80" fill="none" stroke="#f26a12" stroke-width="1.2"/></svg>
<div class="t" style="left:176.20px;width:200px;text-align:center;top:290.80px;font-size:5.4px;line-height:5.4px;color:#2020c0;">13.2</div>
<div class="t" style="left:233.00px;width:200px;text-align:center;top:302.00px;font-size:5.4px;line-height:5.4px;color:#d02020;">12.3</div>
<svg style="position:absolute;left:268.10px;top:356.20px" width="12.40" height="12.40"><circle cx="6.2" cy="6.2" r="4.7250000000000005" fill="none" stroke="#2a2ad8" stroke-width="0.95"/></svg>
<div class="t" style="left:174.30px;width:200px;text-align:center;top:360.70px;font-size:5.4px;line-height:5.4px;font-weight:700;color:#2a2ad8;">A</div>
<svg style="position:absolute;left:324.80px;top:356.20px" width="12.40" height="12.40"><circle cx="6.2" cy="6.2" r="4.7250000000000005" fill="none" stroke="#e83838" stroke-width="0.95"/></svg>
<div class="t" style="left:231.00px;width:200px;text-align:center;top:360.70px;font-size:5.4px;line-height:5.4px;font-weight:700;color:#e83838;">B</div>
<div class="t" style="left:222.30px;top:377.00px;font-size:6.0px;line-height:6.0px;font-weight:700;color:#111;">Value:</div>
<div class="t" style="left:222.30px;top:394.00px;font-size:6.0px;line-height:6.0px;font-weight:700;color:#111;">SD:</div>
<div class="t" style="left:222.30px;top:407.60px;font-size:6.0px;line-height:6.0px;font-weight:700;color:#111;">Diff. SD:</div>
<div class="t" style="left:225.80px;top:416.65px;font-size:5.3px;line-height:5.3px;color:#333;">(B - A)</div>
<div class="t" style="left:222.30px;top:428.40px;font-size:6.0px;line-height:6.0px;font-weight:700;color:#111;">Change:</div>
<div class="t" style="left:176.30px;width:200px;text-align:center;top:378.15px;font-size:5.1px;line-height:5.1px;color:#333;">13.2</div>
<div class="t" style="left:233.30px;width:200px;text-align:center;top:378.15px;font-size:5.1px;line-height:5.1px;color:#333;">12.3</div>
<div class="t" style="left:176.30px;width:200px;text-align:center;top:394.55px;font-size:5.1px;line-height:5.1px;color:#333;">4.6</div>
<div class="t" style="left:233.30px;width:200px;text-align:center;top:394.55px;font-size:5.1px;line-height:5.1px;color:#333;">3.8</div>
<div class="t" style="left:205.00px;width:200px;text-align:center;top:411.35px;font-size:5.1px;line-height:5.1px;color:#333;">-0.8</div>
<div class="t" style="left:167.05px;width:200px;text-align:center;top:428.65px;font-size:5.3px;line-height:5.3px;color:#333;">softer</div>
<div class="t" style="left:205.15px;width:200px;text-align:center;top:428.65px;font-size:5.3px;line-height:5.3px;color:#333;">not sign.</div>
<div class="t" style="left:243.10px;width:200px;text-align:center;top:428.50px;font-size:5.6px;line-height:5.6px;font-weight:700;color:#1a1a1a;">stiffer</div>
<div class="t" style="left:399.30px;width:200px;text-align:center;top:259.55px;font-size:6.1px;line-height:6.1px;font-weight:700;color:#1a1a1a;">ARTh</div>
<div class="t" style="right:375.50px;top:266.05px;font-size:5.7px;line-height:5.7px;font-weight:700;color:#1e1e1e;">thin</div>
<div class="t" style="right:375.10px;top:360.25px;font-size:5.7px;line-height:5.7px;font-weight:700;color:#1e1e1e;">thick</div>
<div class="t" style="right:356.00px;top:272.15px;font-size:5.1px;line-height:5.1px;color:#2a2a2a;">+5 SD</div>
<div class="t" style="right:356.00px;top:285.60px;font-size:5.1px;line-height:5.1px;color:#2a2a2a;">+4 SD</div>
<div class="t" style="right:356.00px;top:299.05px;font-size:5.1px;line-height:5.1px;color:#2a2a2a;">+3 SD</div>
<div class="t" style="right:356.00px;top:312.50px;font-size:5.1px;line-height:5.1px;color:#2a2a2a;">+2 SD</div>
<div class="t" style="right:356.00px;top:325.95px;font-size:5.1px;line-height:5.1px;color:#2a2a2a;">+1 SD</div>
<div class="t" style="right:356.00px;top:339.40px;font-size:5.1px;line-height:5.1px;color:#2a2a2a;">0 SD</div>
<div class="t" style="right:356.00px;top:352.85px;font-size:5.1px;line-height:5.1px;color:#2a2a2a;">-1 SD</div>
<svg style="position:absolute;left:0;top:0" width="800" height="450"><rect x="446.3" y="273.6" width="114" height="80.70" fill="#fff"/><rect x="446.3" y="273.60" width="114" height="40.35" fill="#b3b3b3"/><rect x="446.3" y="313.95" width="114" height="13.45" fill="#ececec"/><path d="M446.8 354.3 V274.0 H560.0 V354.3" fill="none" stroke="#858585" stroke-width="0.9"/><line x1="444.8" y1="354.1" x2="560.3" y2="354.1" stroke="#7a7a7a" stroke-width="0.9"/><line x1="444.7" y1="273.60" x2="446.3" y2="273.60" stroke="#555" stroke-width="0.8"/><line x1="444.7" y1="287.05" x2="446.3" y2="287.05" stroke="#555" stroke-width="0.8"/><line x1="444.7" y1="300.50" x2="446.3" y2="300.50" stroke="#555" stroke-width="0.8"/><line x1="444.7" y1="313.95" x2="446.3" y2="313.95" stroke="#555" stroke-width="0.8"/><line x1="444.7" y1="327.40" x2="446.3" y2="327.40" stroke="#555" stroke-width="0.8"/><line x1="444.7" y1="340.85" x2="446.3" y2="340.85" stroke="#555" stroke-width="0.8"/><line x1="444.7" y1="354.30" x2="446.3" y2="354.30" stroke="#555" stroke-width="0.8"/><line x1="502.90000000000003" y1="274.6" x2="502.90000000000003" y2="354.3" stroke="#333" stroke-width="0.7" stroke-dasharray="0.9 1.1"/><line x1="444.8" y1="287.7" x2="467.0" y2="287.7" stroke="#1212c0" stroke-width="1.35"/><line x1="482.0" y1="287.7" x2="502.90000000000003" y2="287.7" stroke="#1212c0" stroke-width="1.35"/><line x1="502.90000000000003" y1="288" x2="523.3" y2="288" stroke="#e01010" stroke-width="1.35"/><line x1="539.3" y1="288" x2="561.8" y2="288" stroke="#e01010" stroke-width="1.35"/><rect x="484.40" y="422.3" width="38.10" height="17.40" fill="#d2d2d2"/><line x1="446.3" y1="370.7" x2="560.3" y2="370.7" stroke="#858585" stroke-width="0.9"/><line x1="446.3" y1="388.1" x2="560.3" y2="388.1" stroke="#858585" stroke-width="0.9"/><line x1="446.3" y1="405.3" x2="560.3" y2="405.3" stroke="#858585" stroke-width="0.9"/><line x1="446.3" y1="422.3" x2="560.3" y2="422.3" stroke="#858585" stroke-width="0.9"/><line x1="446.3" y1="439.7" x2="560.3" y2="439.7" stroke="#858585" stroke-width="0.9"/><line x1="446.7" y1="370.7" x2="446.7" y2="439.7" stroke="#858585" stroke-width="0.9"/><line x1="559.9" y1="370.7" x2="559.9" y2="439.7" stroke="#858585" stroke-width="0.9"/><line x1="502.90000000000003" y1="370.7" x2="502.90000000000003" y2="405.3" stroke="#858585" stroke-width="0.9"/><line x1="484.40000000000003" y1="422.3" x2="484.40000000000003" y2="439.7" stroke="#858585" stroke-width="0.9"/><line x1="522.5" y1="422.3" x2="522.5" y2="439.7" stroke="#858585" stroke-width="0.9"/><rect x="484.70" y="422.6" width="37.50" height="16.80" fill="none" stroke="#f26a12" stroke-width="1.2"/></svg>
<div class="t" style="left:374.50px;width:200px;text-align:center;top:286.20px;font-size:5.4px;line-height:5.4px;color:#2020c0;">70.2</div>
<div class="t" style="left:431.30px;width:200px;text-align:center;top:286.50px;font-size:5.4px;line-height:5.4px;color:#d02020;">74.2</div>
<svg style="position:absolute;left:466.40px;top:356.20px" width="12.40" height="12.40"><circle cx="6.2" cy="6.2" r="4.7250000000000005" fill="none" stroke="#2a2ad8" stroke-width="0.95"/></svg>
<div class="t" style="left:372.60px;width:200px;text-align:center;top:360.70px;font-size:5.4px;line-height:5.4px;font-weight:700;color:#2a2ad8;">A</div>
<svg style="position:absolute;left:523.10px;top:356.20px" width="12.40" height="12.40"><circle cx="6.2" cy="6.2" r="4.7250000000000005" fill="none" stroke="#e83838" stroke-width="0.95"/></svg>
<div class="t" style="left:429.30px;width:200px;text-align:center;top:360.70px;font-size:5.4px;line-height:5.4px;font-weight:700;color:#e83838;">B</div>
<div class="t" style="left:420.60px;top:377.00px;font-size:6.0px;line-height:6.0px;font-weight:700;color:#111;">Value:</div>
<div class="t" style="left:420.60px;top:394.00px;font-size:6.0px;line-height:6.0px;font-weight:700;color:#111;">SD:</div>
<div class="t" style="left:420.60px;top:407.60px;font-size:6.0px;line-height:6.0px;font-weight:700;color:#111;">Diff. SD:</div>
<div class="t" style="left:424.10px;top:416.65px;font-size:5.3px;line-height:5.3px;color:#333;">(B - A)</div>
<div class="t" style="left:420.60px;top:428.40px;font-size:6.0px;line-height:6.0px;font-weight:700;color:#111;">Change:</div>
<div class="t" style="left:374.60px;width:200px;text-align:center;top:378.15px;font-size:5.1px;line-height:5.1px;color:#333;">70.2</div>
<div class="t" style="left:431.60px;width:200px;text-align:center;top:378.15px;font-size:5.1px;line-height:5.1px;color:#333;">74.2</div>
<div class="t" style="left:374.60px;width:200px;text-align:center;top:394.55px;font-size:5.1px;line-height:5.1px;color:#333;">3.9</div>
<div class="t" style="left:431.60px;width:200px;text-align:center;top:394.55px;font-size:5.1px;line-height:5.1px;color:#333;">3.9</div>
<div class="t" style="left:403.30px;width:200px;text-align:center;top:411.35px;font-size:5.1px;line-height:5.1px;color:#333;">-0.0</div>
<div class="t" style="left:365.35px;width:200px;text-align:center;top:428.65px;font-size:5.3px;line-height:5.3px;color:#333;">thinner</div>
<div class="t" style="left:403.45px;width:200px;text-align:center;top:428.50px;font-size:5.6px;line-height:5.6px;font-weight:700;color:#1a1a1a;">not sign.</div>
<div class="t" style="left:441.40px;width:200px;text-align:center;top:428.65px;font-size:5.3px;line-height:5.3px;color:#333;">thicker</div>
<div class="t" style="left:597.30px;width:200px;text-align:center;top:259.55px;font-size:6.1px;line-height:6.1px;font-weight:700;color:#1a1a1a;">SP-A1</div>
<div class="t" style="right:177.50px;top:266.05px;font-size:5.7px;line-height:5.7px;font-weight:700;color:#1e1e1e;">soft</div>
<div class="t" style="right:177.10px;top:360.25px;font-size:5.7px;line-height:5.7px;font-weight:700;color:#1e1e1e;">stiff</div>
<div class="t" style="right:158.00px;top:272.15px;font-size:5.1px;line-height:5.1px;color:#2a2a2a;">+5 SD</div>
<div class="t" style="right:158.00px;top:285.60px;font-size:5.1px;line-height:5.1px;color:#2a2a2a;">+4 SD</div>
<div class="t" style="right:158.00px;top:299.05px;font-size:5.1px;line-height:5.1px;color:#2a2a2a;">+3 SD</div>
<div class="t" style="right:158.00px;top:312.50px;font-size:5.1px;line-height:5.1px;color:#2a2a2a;">+2 SD</div>
<div class="t" style="right:158.00px;top:325.95px;font-size:5.1px;line-height:5.1px;color:#2a2a2a;">+1 SD</div>
<div class="t" style="right:158.00px;top:339.40px;font-size:5.1px;line-height:5.1px;color:#2a2a2a;">0 SD</div>
<div class="t" style="right:158.00px;top:352.85px;font-size:5.1px;line-height:5.1px;color:#2a2a2a;">-1 SD</div>
<svg style="position:absolute;left:0;top:0" width="800" height="450"><rect x="644.3" y="273.6" width="114" height="80.70" fill="#fff"/><rect x="644.3" y="273.60" width="114" height="40.35" fill="#b3b3b3"/><rect x="644.3" y="313.95" width="114" height="13.45" fill="#ececec"/><path d="M644.8 354.3 V274.0 H758.0 V354.3" fill="none" stroke="#858585" stroke-width="0.9"/><line x1="642.8" y1="354.1" x2="758.3" y2="354.1" stroke="#7a7a7a" stroke-width="0.9"/><line x1="642.6999999999999" y1="273.60" x2="644.3" y2="273.60" stroke="#555" stroke-width="0.8"/><line x1="642.6999999999999" y1="287.05" x2="644.3" y2="287.05" stroke="#555" stroke-width="0.8"/><line x1="642.6999999999999" y1="300.50" x2="644.3" y2="300.50" stroke="#555" stroke-width="0.8"/><line x1="642.6999999999999" y1="313.95" x2="644.3" y2="313.95" stroke="#555" stroke-width="0.8"/><line x1="642.6999999999999" y1="327.40" x2="644.3" y2="327.40" stroke="#555" stroke-width="0.8"/><line x1="642.6999999999999" y1="340.85" x2="644.3" y2="340.85" stroke="#555" stroke-width="0.8"/><line x1="642.6999999999999" y1="354.30" x2="644.3" y2="354.30" stroke="#555" stroke-width="0.8"/><line x1="700.9" y1="274.6" x2="700.9" y2="354.3" stroke="#333" stroke-width="0.7" stroke-dasharray="0.9 1.1"/><line x1="642.8" y1="290.8" x2="665.0" y2="290.8" stroke="#1212c0" stroke-width="1.35"/><line x1="680.0" y1="290.8" x2="700.9" y2="290.8" stroke="#1212c0" stroke-width="1.35"/><line x1="700.9" y1="303.5" x2="721.3" y2="303.5" stroke="#e01010" stroke-width="1.35"/><line x1="737.3" y1="303.5" x2="759.8" y2="303.5" stroke="#e01010" stroke-width="1.35"/><rect x="720.50" y="422.3" width="37.80" height="17.40" fill="#d2d2d2"/><line x1="644.3" y1="370.7" x2="758.3" y2="370.7" stroke="#858585" stroke-width="0.9"/><line x1="644.3" y1="388.1" x2="758.3" y2="388.1" stroke="#858585" stroke-width="0.9"/><line x1="644.3" y1="405.3" x2="758.3" y2="405.3" stroke="#858585" stroke-width="0.9"/><line x1="644.3" y1="422.3" x2="758.3" y2="422.3" stroke="#858585" stroke-width="0.9"/><line x1="644.3" y1="439.7" x2="758.3" y2="439.7" stroke="#858585" stroke-width="0.9"/><line x1="644.6999999999999" y1="370.7" x2="644.6999999999999" y2="439.7" stroke="#858585" stroke-width="0.9"/><line x1="757.9" y1="370.7" x2="757.9" y2="439.7" stroke="#858585" stroke-width="0.9"/><line x1="700.9" y1="370.7" x2="700.9" y2="405.3" stroke="#858585" stroke-width="0.9"/><line x1="682.4" y1="422.3" x2="682.4" y2="439.7" stroke="#858585" stroke-width="0.9"/><line x1="720.5" y1="422.3" x2="720.5" y2="439.7" stroke="#858585" stroke-width="0.9"/><rect x="720.80" y="422.6" width="37.20" height="16.80" fill="none" stroke="#f26a12" stroke-width="1.2"/></svg>
<div class="t" style="left:572.50px;width:200px;text-align:center;top:289.30px;font-size:5.4px;line-height:5.4px;color:#2020c0;">41.6</div>
<div class="t" style="left:629.30px;width:200px;text-align:center;top:302.00px;font-size:5.4px;line-height:5.4px;color:#d02020;">59.5</div>
<svg style="position:absolute;left:664.40px;top:356.20px" width="12.40" height="12.40"><circle cx="6.2" cy="6.2" r="4.7250000000000005" fill="none" stroke="#2a2ad8" stroke-width="0.95"/></svg>
<div class="t" style="left:570.60px;width:200px;text-align:center;top:360.70px;font-size:5.4px;line-height:5.4px;font-weight:700;color:#2a2ad8;">A</div>
<svg style="position:absolute;left:721.10px;top:356.20px" width="12.40" height="12.40"><circle cx="6.2" cy="6.2" r="4.7250000000000005" fill="none" stroke="#e83838" stroke-width="0.95"/></svg>
<div class="t" style="left:627.30px;width:200px;text-align:center;top:360.70px;font-size:5.4px;line-height:5.4px;font-weight:700;color:#e83838;">B</div>
<div class="t" style="left:618.60px;top:377.00px;font-size:6.0px;line-height:6.0px;font-weight:700;color:#111;">Value:</div>
<div class="t" style="left:618.60px;top:394.00px;font-size:6.0px;line-height:6.0px;font-weight:700;color:#111;">SD:</div>
<div class="t" style="left:618.60px;top:407.60px;font-size:6.0px;line-height:6.0px;font-weight:700;color:#111;">Diff. SD:</div>
<div class="t" style="left:622.10px;top:416.65px;font-size:5.3px;line-height:5.3px;color:#333;">(B - A)</div>
<div class="t" style="left:618.60px;top:428.40px;font-size:6.0px;line-height:6.0px;font-weight:700;color:#111;">Change:</div>
<div class="t" style="left:572.60px;width:200px;text-align:center;top:378.15px;font-size:5.1px;line-height:5.1px;color:#333;">41.6</div>
<div class="t" style="left:629.60px;width:200px;text-align:center;top:378.15px;font-size:5.1px;line-height:5.1px;color:#333;">59.5</div>
<div class="t" style="left:572.60px;width:200px;text-align:center;top:394.55px;font-size:5.1px;line-height:5.1px;color:#333;">3.7</div>
<div class="t" style="left:629.60px;width:200px;text-align:center;top:394.55px;font-size:5.1px;line-height:5.1px;color:#333;">2.8</div>
<div class="t" style="left:601.30px;width:200px;text-align:center;top:411.35px;font-size:5.1px;line-height:5.1px;color:#333;">-0.9</div>
<div class="t" style="left:563.35px;width:200px;text-align:center;top:428.65px;font-size:5.3px;line-height:5.3px;color:#333;">softer</div>
<div class="t" style="left:601.45px;width:200px;text-align:center;top:428.65px;font-size:5.3px;line-height:5.3px;color:#333;">not sign.</div>
<div class="t" style="left:639.40px;width:200px;text-align:center;top:428.50px;font-size:5.6px;line-height:5.6px;font-weight:700;color:#1a1a1a;">stiffer</div>
</body></html>
